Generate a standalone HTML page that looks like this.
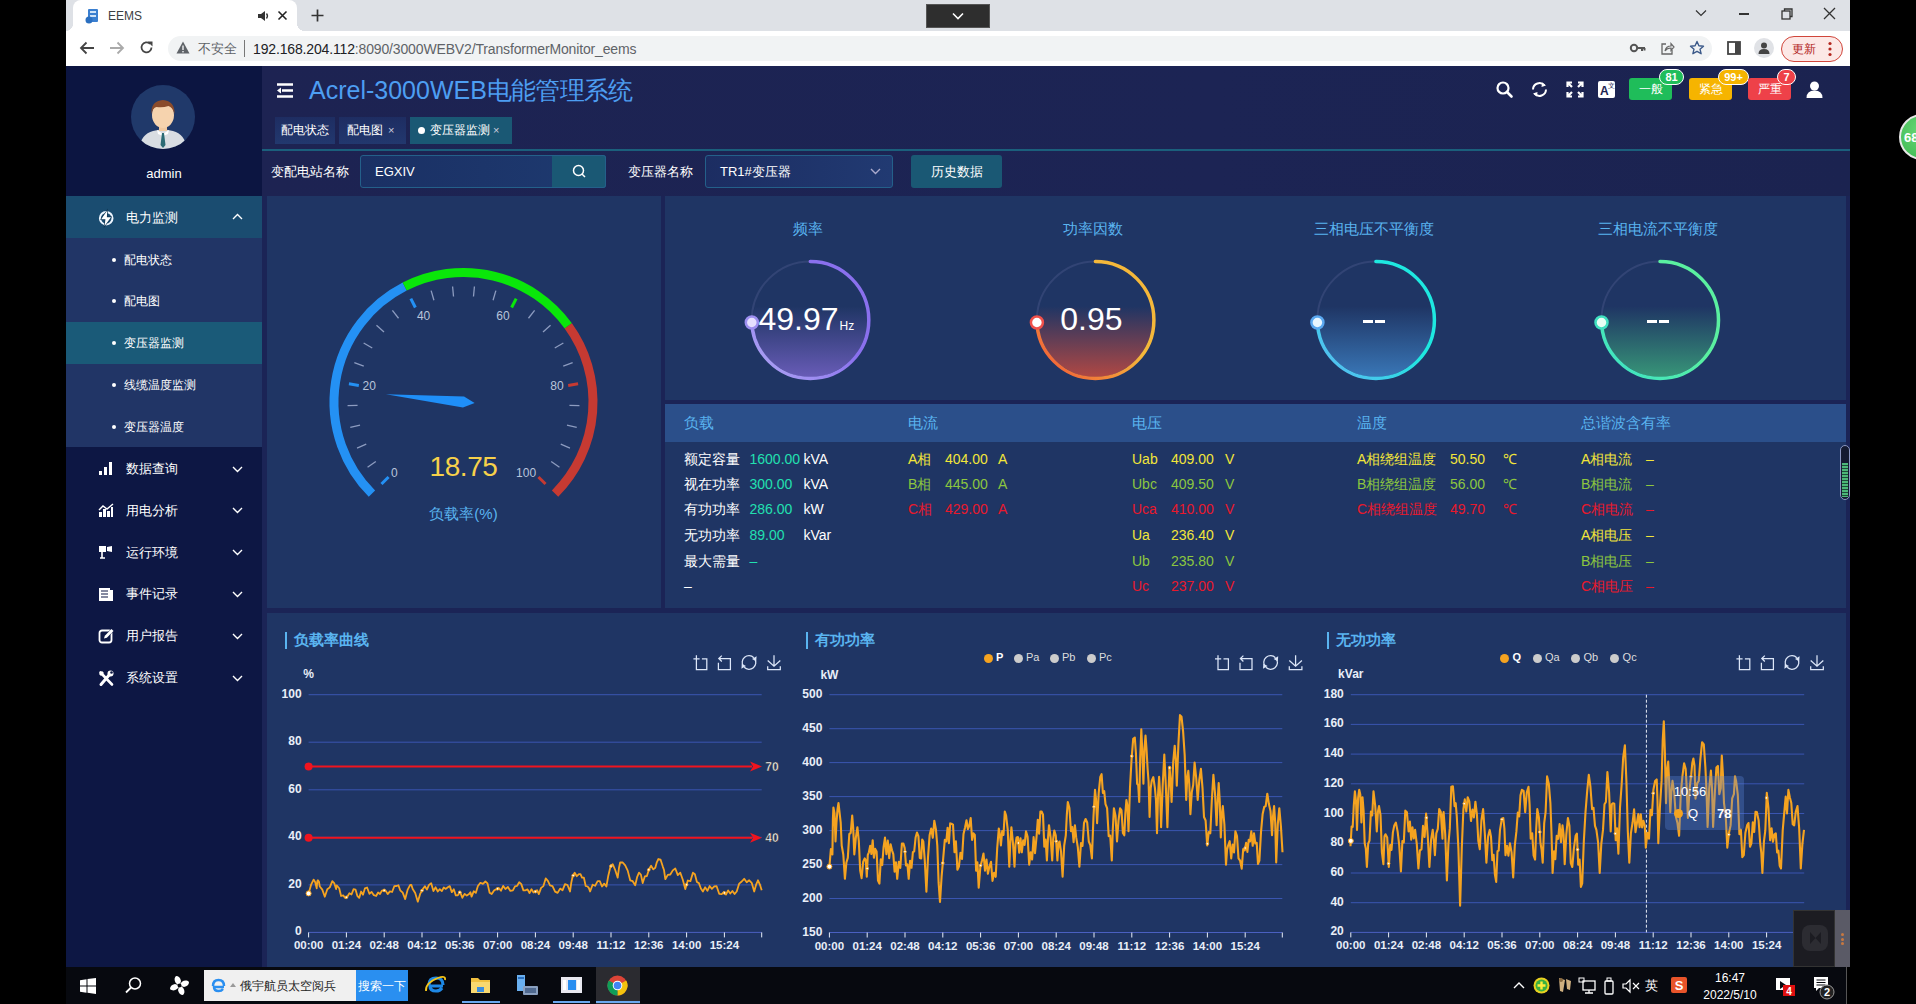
<!DOCTYPE html><html><head><meta charset="utf-8"><style>
html,body{margin:0;padding:0;}
body{width:1916px;height:1004px;background:#000;position:relative;overflow:hidden;font-family:'Liberation Sans', sans-serif;}
div{box-sizing:border-box;}
svg{position:absolute;overflow:visible;}
.c{letter-spacing:var(--ls,0px);}
.tofu .c{letter-spacing:calc(var(--ls,0px) + 0.25em);-webkit-text-stroke:0.07em currentColor;}
</style></head><body>
<script>(function(){var s=document.createElement('span');s.style.cssText='position:absolute;left:0;top:0;font-family:"Liberation Sans",sans-serif;font-size:100px;visibility:hidden;white-space:nowrap';s.textContent='电电电电';document.body.appendChild(s);if(s.getBoundingClientRect().width<350)document.documentElement.classList.add('tofu');document.body.removeChild(s);})();</script>
<div style="position:absolute;left:66px;top:0px;width:1784px;height:31px;background:#dee1e6;"></div>
<div style="position:absolute;left:73px;top:0px;width:224px;height:31px;background:#fff;border-radius:8px 8px 0 0;"></div>
<div style="position:absolute;left:66px;top:23px;width:7px;height:8px;background:radial-gradient(circle at -1px 0,#dee1e6 8px,#fff 8.5px);"></div>
<div style="position:absolute;left:297px;top:23px;width:8px;height:8px;background:radial-gradient(circle at 100% 0,#dee1e6 8px,#fff 8px);"></div>
<svg style="left:85px;top:8px" width="16" height="16"><rect x="3" y="1" width="10" height="13" rx="1" fill="#3a7fd0"/><rect x="5" y="3" width="6" height="2" fill="#cfe3f7"/><rect x="5" y="7" width="6" height="2" fill="#cfe3f7"/><circle cx="4" cy="12" r="3.5" fill="#2a6fc0"/></svg>
<div style="position:absolute;left:108px;top:7.0px;height:18px;line-height:18px;font-size:12px;color:#3c4043;white-space:nowrap;">EEMS</div>
<svg style="left:257px;top:10px" width="12" height="12"><path d="M1 4h3l4-3v10l-4-3H1z" fill="#333"/><path d="M9.5 3.5q2 2.5 0 5" stroke="#333" stroke-width="1.3" fill="none"/></svg>
<svg style="left:277px;top:10px" width="11" height="11"><path d="M1.5 1.5l8 8M9.5 1.5l-8 8" stroke="#222" stroke-width="1.6"/></svg>
<svg style="left:311px;top:9px" width="13" height="13"><path d="M6.5 0.5v12M0.5 6.5h12" stroke="#333" stroke-width="1.7"/></svg>
<div style="position:absolute;left:926px;top:4px;width:64px;height:24px;background:#2e2e2e;border:1px solid #555;"></div>
<svg style="left:952px;top:12px" width="12" height="8"><path d="M1 1.5l5 5 5-5" stroke="#fff" stroke-width="1.6" fill="none"/></svg>
<svg style="left:1695px;top:9px" width="12" height="8"><path d="M1 1.5l5 5 5-5" stroke="#333" stroke-width="1.2" fill="none"/></svg>
<div style="position:absolute;left:1739px;top:13px;width:10px;height:1.5px;background:#333;"></div>
<svg style="left:1781px;top:8px" width="12" height="12"><rect x="1" y="3" width="8" height="8" stroke="#333" stroke-width="1.3" fill="none"/><path d="M3.5 3V1h7.5v7.5H9" stroke="#333" stroke-width="1.3" fill="none"/></svg>
<svg style="left:1823px;top:7px" width="13" height="13"><path d="M1 1l11 11M12 1L1 12" stroke="#333" stroke-width="1.3"/></svg>
<div style="position:absolute;left:66px;top:31px;width:1784px;height:35px;background:#fff;"></div>
<svg style="left:79px;top:41px" width="16" height="14"><path d="M15 7H2M7.5 1.5L2 7l5.5 5.5" stroke="#444" stroke-width="1.8" fill="none"/></svg>
<svg style="left:109px;top:41px" width="16" height="14"><path d="M1 7h13M8.5 1.5L14 7l-5.5 5.5" stroke="#aaa" stroke-width="1.8" fill="none"/></svg>
<svg style="left:139px;top:40px" width="15" height="15"><path d="M12.5 7.5A5 5 0 1 1 11 3.8" stroke="#444" stroke-width="1.8" fill="none"/><path d="M8.5 1.5h5v5z" fill="#444"/></svg>
<div style="position:absolute;left:168px;top:36px;width:1544px;height:25px;background:#f1f3f4;border-radius:13px;"></div>
<svg style="left:176px;top:41px" width="14" height="13"><path d="M7 0.5L13.5 12.5H0.5z" fill="#5f6368"/><rect x="6.3" y="4.5" width="1.4" height="4.5" fill="#f1f3f4"/><rect x="6.3" y="10" width="1.4" height="1.4" fill="#f1f3f4"/></svg>
<div style="position:absolute;left:198px;top:39.0px;height:19px;line-height:19px;font-size:13px;color:#5f6368;white-space:nowrap;"><span class="c">不安全</span></div>
<div style="position:absolute;left:244px;top:40px;width:1px;height:17px;background:#777;"></div>
<div style="position:absolute;left:253px;top:38.5px;height:20px;line-height:20px;font-size:14px;color:#5f6368;white-space:nowrap;letter-spacing:-0.15px;"><span style="color:#202124">192.168.204.112</span>:8090/3000WEBV2/TransformerMonitor_eems</div>
<svg style="left:1630px;top:43px" width="16" height="10"><circle cx="4" cy="5" r="3.2" stroke="#555" stroke-width="2" fill="none"/><path d="M7 5h8M12 5v3M14.5 5v2.5" stroke="#555" stroke-width="2"/></svg>
<svg style="left:1660px;top:41px" width="14" height="14"><path d="M6 3H2v10h10V9" stroke="#666" stroke-width="1.3" fill="none"/><path d="M5 10q1-5 6-5V2.5l3 3.5-3 3.5V7q-4 0-6 3z" stroke="#666" stroke-width="1.2" fill="none"/></svg>
<svg style="left:1689px;top:40px" width="16" height="16"><path d="M8 1.5l1.9 4.3 4.6.4-3.5 3 1.1 4.5L8 11.3l-4.1 2.4L5 9.2l-3.5-3 4.6-.4z" stroke="#3c5a8a" stroke-width="1.4" fill="none" stroke-linejoin="round"/></svg>
<svg style="left:1727px;top:41px" width="14" height="14"><rect x="1" y="1" width="12" height="12" stroke="#444" stroke-width="1.8" fill="none"/><rect x="8" y="1" width="5" height="12" fill="#444"/></svg>
<div style="position:absolute;left:1754px;top:38px;width:20px;height:20px;background:#e0e2e6;border-radius:50%;"></div>
<svg style="left:1757px;top:41px" width="14" height="14"><circle cx="7" cy="4.5" r="3" fill="#444"/><path d="M1.5 13q0-5 5.5-5t5.5 5z" fill="#444"/></svg>
<div style="position:absolute;left:1781px;top:36px;width:62px;height:26px;background:#fce8e6;border:1.3px solid #d0453a;border-radius:13px;"></div>
<div style="position:absolute;left:1792px;top:40.0px;height:18px;line-height:18px;font-size:12px;color:#b3261e;white-space:nowrap;"><span class="c">更新</span></div>
<svg style="left:1828px;top:41px" width="4" height="16"><circle cx="2" cy="2.5" r="1.6" fill="#b3261e"/><circle cx="2" cy="8" r="1.6" fill="#b3261e"/><circle cx="2" cy="13.5" r="1.6" fill="#b3261e"/></svg>
<div style="position:absolute;left:66px;top:66px;width:1784px;height:901px;background:#1b2456;"></div>
<div style="position:absolute;left:262px;top:66px;width:1588px;height:130px;background:linear-gradient(90deg,#1d2352,#1c2454 60%,#1b2350);"></div>
<div style="position:absolute;left:262px;top:149px;width:1588px;height:1.5px;background:#1b5f7c;"></div>
<div style="position:absolute;left:66px;top:66px;width:196px;height:901px;background:#0d1744;"></div>
<div style="position:absolute;left:66px;top:66px;width:196px;height:130px;background:#0c1541;"></div>
<svg style="left:131px;top:85px" width="64" height="64">
<defs><clipPath id="av"><circle cx="32" cy="32" r="32"/></clipPath></defs>
<circle cx="32" cy="32" r="32" fill="#20396a"/>
<g clip-path="url(#av)">
<path d="M8 64q2-15 14-18l10-2 10 2q12 3 14 18z" fill="#d9dde2"/>
<path d="M26 45l6 4 6-4-1 4-5 2-5-2z" fill="#ffffff"/>
<path d="M31 48h2l1.5 12-2.5 3-2.5-3z" fill="#2c6b75"/>
<rect x="28" y="36" width="8" height="10" fill="#f1c9a0"/>
<ellipse cx="32" cy="30" rx="11" ry="13" fill="#f6d3ae"/>
<path d="M20.5 29q-1-13 11.5-14q12 1 11.5 14q-2-7-6-8q-6 2-12 1q-4 1-5 7z" fill="#8a4b2b"/>
</g></svg>
<div style="position:absolute;left:164px;top:163.5px;height:19px;line-height:19px;font-size:13px;color:#fff;white-space:nowrap;transform:translateX(-50%);">admin</div>
<div style="position:absolute;left:66px;top:196px;width:196px;height:42px;background:#1a4c70;"></div>
<svg style="left:98px;top:210px" width="17" height="17"><circle cx="8.2" cy="8.2" r="6.3" stroke="#eef6ff" stroke-width="2" fill="none"/><path d="M9.2 0.6L3.2 9.2H7.4L6.6 16L13 7.2H8.9z" fill="#fff" stroke="#0f3350" stroke-width="1.2" paint-order="stroke"/></svg>
<div style="position:absolute;left:126px;top:208.0px;height:19px;line-height:19px;font-size:13px;color:#fff;white-space:nowrap;"><span class="c">电力监测</span></div>
<svg style="left:232px;top:213px" width="11" height="7"><path d="M1 6l4.5-4.5L10 6" stroke="#fff" stroke-width="1.4" fill="none"/></svg>
<div style="position:absolute;left:66px;top:238px;width:196px;height:209px;background:#213566;"></div>
<div style="position:absolute;left:66px;top:322px;width:196px;height:42px;background:#1a5a78;"></div>
<div style="position:absolute;left:112px;top:257.5px;width:4px;height:4px;background:#fff;border-radius:50%;"></div>
<div style="position:absolute;left:124px;top:250.5px;height:18px;line-height:18px;font-size:12px;color:#fff;white-space:nowrap;"><span class="c">配电状态</span></div>
<div style="position:absolute;left:112px;top:299.3px;width:4px;height:4px;background:#fff;border-radius:50%;"></div>
<div style="position:absolute;left:124px;top:292.3px;height:18px;line-height:18px;font-size:12px;color:#fff;white-space:nowrap;"><span class="c">配电图</span></div>
<div style="position:absolute;left:112px;top:341.1px;width:4px;height:4px;background:#fff;border-radius:50%;"></div>
<div style="position:absolute;left:124px;top:334.1px;height:18px;line-height:18px;font-size:12px;color:#fff;white-space:nowrap;"><span class="c">变压器监测</span></div>
<div style="position:absolute;left:112px;top:382.9px;width:4px;height:4px;background:#fff;border-radius:50%;"></div>
<div style="position:absolute;left:124px;top:375.9px;height:18px;line-height:18px;font-size:12px;color:#fff;white-space:nowrap;"><span class="c">线缆温度监测</span></div>
<div style="position:absolute;left:112px;top:424.7px;width:4px;height:4px;background:#fff;border-radius:50%;"></div>
<div style="position:absolute;left:124px;top:417.7px;height:18px;line-height:18px;font-size:12px;color:#fff;white-space:nowrap;"><span class="c">变压器温度</span></div>
<svg style="left:98px;top:460.5px" width="16" height="16"><path d="M1 14h3V10H1zM6 14h3V6H6zM11 14h3V1h-3z" fill="#fff"/></svg>
<div style="position:absolute;left:126px;top:459.0px;height:19px;line-height:19px;font-size:13px;color:#fff;white-space:nowrap;"><span class="c">数据查询</span></div>
<svg style="left:232px;top:465.5px" width="11" height="7"><path d="M1 1l4.5 4.5L10 1" stroke="#fff" stroke-width="1.4" fill="none"/></svg>
<svg style="left:98px;top:502.3px" width="16" height="16"><path d="M1 15V10h3v5zM5 15V7h3v8zM9 15V9h3v6zM13 15V5h2v10z" fill="#fff"/><path d="M1 8l4-4 4 3 6-5" stroke="#fff" stroke-width="1.4" fill="none"/></svg>
<div style="position:absolute;left:126px;top:500.8px;height:19px;line-height:19px;font-size:13px;color:#fff;white-space:nowrap;"><span class="c">用电分析</span></div>
<svg style="left:232px;top:507.3px" width="11" height="7"><path d="M1 1l4.5 4.5L10 1" stroke="#fff" stroke-width="1.4" fill="none"/></svg>
<svg style="left:98px;top:544.1px" width="16" height="16"><path d="M1 2h7v6H1zM9 3l5-1v6l-5-1z" fill="#fff"/><path d="M4 8v6M2 14h5" stroke="#fff" stroke-width="1.6"/></svg>
<div style="position:absolute;left:126px;top:542.6px;height:19px;line-height:19px;font-size:13px;color:#fff;white-space:nowrap;"><span class="c">运行环境</span></div>
<svg style="left:232px;top:549.1px" width="11" height="7"><path d="M1 1l4.5 4.5L10 1" stroke="#fff" stroke-width="1.4" fill="none"/></svg>
<svg style="left:98px;top:585.9px" width="16" height="16"><path d="M1 2h11v13H1z" fill="#fff"/><path d="M3 5h7M3 8h7M3 11h7" stroke="#0d1744" stroke-width="1.2"/><path d="M12 4h3v11h-3" fill="#fff"/></svg>
<div style="position:absolute;left:126px;top:584.4px;height:19px;line-height:19px;font-size:13px;color:#fff;white-space:nowrap;"><span class="c">事件记录</span></div>
<svg style="left:232px;top:590.9px" width="11" height="7"><path d="M1 1l4.5 4.5L10 1" stroke="#fff" stroke-width="1.4" fill="none"/></svg>
<svg style="left:98px;top:627.7px" width="16" height="16"><rect x="1.5" y="2.5" width="12" height="12" rx="2.5" stroke="#fff" stroke-width="1.8" fill="none"/><path d="M6 10.5l0.8-2.8L13.5 1l2 2-6.7 6.7z" fill="#fff" stroke="#0d1744" stroke-width="0.8" paint-order="stroke"/></svg>
<div style="position:absolute;left:126px;top:626.2px;height:19px;line-height:19px;font-size:13px;color:#fff;white-space:nowrap;"><span class="c">用户报告</span></div>
<svg style="left:232px;top:632.7px" width="11" height="7"><path d="M1 1l4.5 4.5L10 1" stroke="#fff" stroke-width="1.4" fill="none"/></svg>
<svg style="left:98px;top:669.5px" width="16" height="16"><path d="M3 14.5L12 4" stroke="#fff" stroke-width="3" stroke-linecap="round"/><circle cx="12.5" cy="3.5" r="3" fill="#fff"/><circle cx="13.5" cy="2.5" r="1.3" fill="#0d1744"/><path d="M2.5 2.5l11.5 12" stroke="#fff" stroke-width="2.6" stroke-linecap="round"/><path d="M1 4l3-3 2 2-3 3z" fill="#fff"/></svg>
<div style="position:absolute;left:126px;top:668.0px;height:19px;line-height:19px;font-size:13px;color:#fff;white-space:nowrap;"><span class="c">系统设置</span></div>
<svg style="left:232px;top:674.5px" width="11" height="7"><path d="M1 1l4.5 4.5L10 1" stroke="#fff" stroke-width="1.4" fill="none"/></svg>
<svg style="left:277px;top:83px" width="17" height="15"><path d="M0 1.5h16M5 7.5h11M0 13.5h16" stroke="#fff" stroke-width="2.6"/><path d="M0 7.5l4-3v6z" fill="#fff"/></svg>
<div style="position:absolute;left:309px;top:74.5px;height:31px;line-height:31px;font-size:25px;color:#4d9ef2;white-space:nowrap;">Acrel-3000WEB<span style="--ls:-0.7px"><span class="c">电能管理系统</span></span></div>
<div style="position:absolute;left:275px;top:117px;width:60px;height:27px;background:linear-gradient(180deg,#1e2d62,#22386e);"></div>
<div style="position:absolute;left:305px;top:121.8px;height:17.5px;line-height:17.5px;font-size:11.5px;color:#fff;white-space:nowrap;transform:translateX(-50%);"><span class="c">配电状态</span></div>
<div style="position:absolute;left:339px;top:117px;width:67px;height:27px;background:linear-gradient(180deg,#1e2d62,#22386e);"></div>
<div style="position:absolute;left:347px;top:121.8px;height:17.5px;line-height:17.5px;font-size:11.5px;color:#fff;white-space:nowrap;"><span class="c">配电图</span></div>
<div style="position:absolute;left:388px;top:122.0px;height:17px;line-height:17px;font-size:11px;color:#ccd;white-space:nowrap;">×</div>
<div style="position:absolute;left:410px;top:117px;width:102px;height:27px;background:#1a5874;"></div>
<div style="position:absolute;left:418px;top:127px;width:7px;height:7px;background:#fff;border-radius:50%;"></div>
<div style="position:absolute;left:430px;top:121.8px;height:17.5px;line-height:17.5px;font-size:11.5px;color:#fff;white-space:nowrap;"><span class="c">变压器监测</span></div>
<div style="position:absolute;left:493px;top:122.0px;height:17px;line-height:17px;font-size:11px;color:#ccd;white-space:nowrap;">×</div>
<div style="position:absolute;left:271px;top:162.0px;height:19px;line-height:19px;font-size:13px;color:#fff;white-space:nowrap;"><span class="c">变配电站名称</span></div>
<div style="position:absolute;left:360px;top:155px;width:246px;height:33px;background:linear-gradient(90deg,#1a3064,#1e3a70);border:1px solid #24608a;border-radius:3px;"></div>
<div style="position:absolute;left:375px;top:162.0px;height:19px;line-height:19px;font-size:13px;color:#fff;white-space:nowrap;">EGXIV</div>
<div style="position:absolute;left:552px;top:155px;width:54px;height:33px;background:#1a5874;border:1px solid #24608a;border-left:none;border-radius:0 3px 3px 0;"></div>
<svg style="left:572px;top:164px" width="14" height="14"><circle cx="6.5" cy="6.5" r="5" stroke="#fff" stroke-width="1.5" fill="none"/><path d="M10 10l3 3" stroke="#fff" stroke-width="1.5"/></svg>
<div style="position:absolute;left:628px;top:162.0px;height:19px;line-height:19px;font-size:13px;color:#fff;white-space:nowrap;"><span class="c">变压器名称</span></div>
<div style="position:absolute;left:705px;top:155px;width:188px;height:33px;background:linear-gradient(90deg,#1c2d62,#213a72);border:1px solid #24608a;border-radius:3px;"></div>
<div style="position:absolute;left:720px;top:162.0px;height:19px;line-height:19px;font-size:13px;color:#fff;white-space:nowrap;">TR1#<span class="c">变压器</span></div>
<svg style="left:870px;top:168px" width="11" height="7"><path d="M1 1l4.5 4.5L10 1" stroke="#aac" stroke-width="1.4" fill="none"/></svg>
<div style="position:absolute;left:911px;top:155px;width:91px;height:33px;background:#1a5874;border-radius:3px;"></div>
<div style="position:absolute;left:956.5px;top:162.0px;height:19px;line-height:19px;font-size:13px;color:#fff;white-space:nowrap;transform:translateX(-50%);"><span class="c">历史数据</span></div>
<svg style="left:1496px;top:81px" width="17" height="17"><circle cx="7" cy="7" r="5.5" stroke="#fff" stroke-width="2.2" fill="none"/><path d="M11 11l4.5 4.5" stroke="#fff" stroke-width="2.6" stroke-linecap="round"/></svg>
<svg style="left:1530px;top:81px" width="19" height="17"><path d="M3 8.5A6.5 6.5 0 0 1 14.5 4.5" stroke="#fff" stroke-width="2" fill="none"/><path d="M16 8.5A6.5 6.5 0 0 1 4.5 12.5" stroke="#fff" stroke-width="2" fill="none"/><path d="M12 1.5l4 3-4.5 1.5z" fill="#fff"/><path d="M7 15.5l-4-3 4.5-1.5z" fill="#fff"/></svg>
<svg style="left:1566px;top:81px" width="18" height="17"><g stroke="#fff" stroke-width="2.2" fill="none"><path d="M1.5 6V1.5H6M1.5 1.5l4.5 4.5"/><path d="M16.5 6V1.5H12M16.5 1.5L12 6"/><path d="M1.5 11v4.5H6M1.5 15.5L6 11"/><path d="M16.5 11v4.5H12M16.5 15.5L12 11"/></g></svg>
<div style="position:absolute;left:1598px;top:81px;width:17px;height:17px;background:#fff;border-radius:2px;"></div>
<div style="position:absolute;left:1600px;top:82.0px;height:18px;line-height:18px;font-size:12px;color:#1d2352;white-space:nowrap;"><b>A</b></div>
<div style="position:absolute;left:1608px;top:78.5px;height:13px;line-height:13px;font-size:7px;color:#1d2352;white-space:nowrap;"><span class="c">文</span></div>
<div style="position:absolute;left:1629px;top:78px;width:43px;height:22px;background:#1fbd5a;border-radius:3px;"></div>
<div style="position:absolute;left:1650.5px;top:80.0px;height:18px;line-height:18px;font-size:12px;color:#fff;white-space:nowrap;transform:translateX(-50%);"><span class="c">一般</span></div>
<div style="position:absolute;left:1659px;top:69px;width:25px;height:16px;background:#1fbd5a;border:1px solid #fff;border-radius:8px;"></div>
<div style="position:absolute;left:1671.5px;top:68.5px;height:17px;line-height:17px;font-size:11px;color:#fff;white-space:nowrap;transform:translateX(-50%);font-weight:bold;">81</div>
<div style="position:absolute;left:1689px;top:78px;width:43px;height:22px;background:#f6b400;border-radius:3px;"></div>
<div style="position:absolute;left:1710.5px;top:80.0px;height:18px;line-height:18px;font-size:12px;color:#fff;white-space:nowrap;transform:translateX(-50%);"><span class="c">紧急</span></div>
<div style="position:absolute;left:1718px;top:69px;width:31px;height:16px;background:#f6b400;border:1px solid #fff;border-radius:8px;"></div>
<div style="position:absolute;left:1733.5px;top:68.5px;height:17px;line-height:17px;font-size:11px;color:#fff;white-space:nowrap;transform:translateX(-50%);font-weight:bold;">99+</div>
<div style="position:absolute;left:1748px;top:78px;width:43px;height:22px;background:#ee4149;border-radius:3px;"></div>
<div style="position:absolute;left:1769.5px;top:80.0px;height:18px;line-height:18px;font-size:12px;color:#fff;white-space:nowrap;transform:translateX(-50%);"><span class="c">严重</span></div>
<div style="position:absolute;left:1777px;top:69px;width:19px;height:16px;background:#ee4149;border:1px solid #fff;border-radius:8px;"></div>
<div style="position:absolute;left:1786.5px;top:68.5px;height:17px;line-height:17px;font-size:11px;color:#fff;white-space:nowrap;transform:translateX(-50%);font-weight:bold;">7</div>
<svg style="left:1806px;top:81px" width="17" height="17"><circle cx="8.5" cy="5" r="4.5" fill="#fff"/><path d="M0.5 17q0-7.5 8-7.5t8 7.5z" fill="#fff"/></svg>
<div style="position:absolute;left:267px;top:196px;width:394px;height:412px;background:#1f3564;"></div>
<div style="position:absolute;left:665px;top:196px;width:1181px;height:204px;background:#1f3564;"></div>
<div style="position:absolute;left:665px;top:404px;width:1181px;height:38px;background:#2b4f8a;"></div>
<div style="position:absolute;left:665px;top:442px;width:1181px;height:166px;background:#1f3564;"></div>
<div style="position:absolute;left:267px;top:613px;width:1579px;height:354px;background:#1f3564;"></div>
<svg style="left:0;top:0" width="1916" height="1004" font-family="Liberation Sans, sans-serif"><path d="M371.93 493.57A129.5 129.5 0 0 1 404.71 286.61" stroke="#2491f4" stroke-width="9" fill="none"/><path d="M404.71 286.61A129.5 129.5 0 0 1 568.27 325.88" stroke="#0ae60a" stroke-width="9" fill="none"/><path d="M568.27 325.88A129.5 129.5 0 0 1 555.07 493.57" stroke="#c63a32" stroke-width="9" fill="none"/><line x1="381.48" y1="484.02" x2="388.55" y2="476.95" stroke="#2491f4" stroke-width="3"/><line x1="367.56" y1="467.20" x2="375.83" y2="461.58" stroke="#8d9cc0" stroke-width="1.3"/><line x1="357.04" y1="448.07" x2="366.22" y2="444.10" stroke="#8d9cc0" stroke-width="1.3"/><line x1="350.29" y1="427.30" x2="360.05" y2="425.12" stroke="#8d9cc0" stroke-width="1.3"/><line x1="347.56" y1="405.64" x2="357.55" y2="405.33" stroke="#8d9cc0" stroke-width="1.3"/><line x1="348.93" y1="383.85" x2="358.81" y2="385.42" stroke="#2491f4" stroke-width="3"/><line x1="354.36" y1="362.71" x2="363.77" y2="366.09" stroke="#8d9cc0" stroke-width="1.3"/><line x1="363.65" y1="342.95" x2="372.26" y2="348.04" stroke="#8d9cc0" stroke-width="1.3"/><line x1="376.49" y1="325.29" x2="383.99" y2="331.90" stroke="#8d9cc0" stroke-width="1.3"/><line x1="392.40" y1="310.34" x2="398.53" y2="318.24" stroke="#8d9cc0" stroke-width="1.3"/><line x1="410.84" y1="298.64" x2="415.38" y2="307.55" stroke="#2491f4" stroke-width="3"/><line x1="431.14" y1="290.61" x2="433.93" y2="300.21" stroke="#8d9cc0" stroke-width="1.3"/><line x1="452.58" y1="286.51" x2="453.52" y2="296.47" stroke="#8d9cc0" stroke-width="1.3"/><line x1="474.42" y1="286.51" x2="473.48" y2="296.47" stroke="#8d9cc0" stroke-width="1.3"/><line x1="495.86" y1="290.61" x2="493.07" y2="300.21" stroke="#8d9cc0" stroke-width="1.3"/><line x1="516.16" y1="298.64" x2="511.62" y2="307.55" stroke="#0ae60a" stroke-width="3"/><line x1="534.60" y1="310.34" x2="528.47" y2="318.24" stroke="#8d9cc0" stroke-width="1.3"/><line x1="550.51" y1="325.29" x2="543.01" y2="331.90" stroke="#8d9cc0" stroke-width="1.3"/><line x1="563.35" y1="342.95" x2="554.74" y2="348.04" stroke="#8d9cc0" stroke-width="1.3"/><line x1="572.64" y1="362.71" x2="563.23" y2="366.09" stroke="#8d9cc0" stroke-width="1.3"/><line x1="578.07" y1="383.85" x2="568.19" y2="385.42" stroke="#c63a32" stroke-width="3"/><line x1="579.44" y1="405.64" x2="569.45" y2="405.33" stroke="#8d9cc0" stroke-width="1.3"/><line x1="576.71" y1="427.30" x2="566.95" y2="425.12" stroke="#8d9cc0" stroke-width="1.3"/><line x1="569.96" y1="448.07" x2="560.78" y2="444.10" stroke="#8d9cc0" stroke-width="1.3"/><line x1="559.44" y1="467.20" x2="551.17" y2="461.58" stroke="#8d9cc0" stroke-width="1.3"/><line x1="545.52" y1="484.02" x2="538.45" y2="476.95" stroke="#c63a32" stroke-width="3"/><text x="394.4" y="477.1" font-size="12" fill="#b8c4da" text-anchor="middle">0</text><text x="369.2" y="389.8" font-size="12" fill="#b8c4da" text-anchor="middle">20</text><text x="423.6" y="319.9" font-size="12" fill="#b8c4da" text-anchor="middle">40</text><text x="503.0" y="319.9" font-size="12" fill="#b8c4da" text-anchor="middle">60</text><text x="557.0" y="389.8" font-size="12" fill="#b8c4da" text-anchor="middle">80</text><text x="526.1" y="477.1" font-size="12" fill="#b8c4da" text-anchor="middle">100</text><path d="M385.88 394.35L462.95 407.57L474.65 403.10L464.05 396.43Z" fill="#1f8ff8"/></svg>
<div style="position:absolute;left:463.5px;top:450.0px;height:34px;line-height:34px;font-size:28px;color:#f7d14a;white-space:nowrap;transform:translateX(-50%);letter-spacing:-0.4px;">18.75</div>
<div style="position:absolute;left:463.5px;top:502.5px;height:21px;line-height:21px;font-size:15px;color:#5ab4f0;white-space:nowrap;transform:translateX(-50%);"><span class="c">负载率</span>(%)</div>
<div style="position:absolute;left:808.3px;top:217.5px;height:21px;line-height:21px;font-size:15px;color:#5ab4f0;white-space:nowrap;transform:translateX(-50%);"><span class="c">频率</span></div>
<svg style="left:0;top:0" width="1916" height="1004"><defs><linearGradient id="rg0" x1="1" y1="0" x2="0" y2="1"><stop offset="0.45" stop-color="#8a70ee"/><stop offset="1" stop-color="#b0a8f4"/></linearGradient><linearGradient id="rf0" x1="0" y1="0" x2="0" y2="1"><stop offset="0.38" stop-color="#7060c0" stop-opacity="0"/><stop offset="1" stop-color="#7060c0" stop-opacity="0.9"/></linearGradient></defs><circle cx="810.3" cy="320" r="57.0" fill="url(#rf0)"/><circle cx="810.3" cy="320" r="58.5" stroke="#3a4c7c" stroke-opacity="0.7" stroke-width="2" fill="none"/><path d="M810.3 261.5A58.5 58.5 0 1 1 751.8 320" stroke="url(#rg0)" stroke-width="3.5" fill="none" stroke-linecap="round"/><circle cx="751.8" cy="322.5" r="6" fill="#e6e0ff" stroke="#9d8ff0" stroke-width="2.5"/></svg>
<div style="position:absolute;left:806.3px;top:300.0px;height:38px;line-height:38px;font-size:32px;color:#fff;white-space:nowrap;transform:translateX(-50%);">49.97<span style="font-size:12px;margin-left:1px">Hz</span></div>
<div style="position:absolute;left:1093.4px;top:217.5px;height:21px;line-height:21px;font-size:15px;color:#5ab4f0;white-space:nowrap;transform:translateX(-50%);"><span class="c">功率因数</span></div>
<svg style="left:0;top:0" width="1916" height="1004"><defs><linearGradient id="rg1" x1="1" y1="0" x2="0" y2="1"><stop offset="0.45" stop-color="#f5b83a"/><stop offset="1" stop-color="#f05038"/></linearGradient><linearGradient id="rf1" x1="0" y1="0" x2="0" y2="1"><stop offset="0.38" stop-color="#c04a40" stop-opacity="0"/><stop offset="1" stop-color="#c04a40" stop-opacity="0.9"/></linearGradient></defs><circle cx="1095.4" cy="320" r="57.0" fill="url(#rf1)"/><circle cx="1095.4" cy="320" r="58.5" stroke="#3a4c7c" stroke-opacity="0.7" stroke-width="2" fill="none"/><path d="M1095.4 261.5A58.5 58.5 0 1 1 1036.9 320" stroke="url(#rg1)" stroke-width="3.5" fill="none" stroke-linecap="round"/><circle cx="1036.9" cy="322.5" r="6" fill="#fff" stroke="#f0504a" stroke-width="2.5"/></svg>
<div style="position:absolute;left:1091.4px;top:300.0px;height:38px;line-height:38px;font-size:32px;color:#fff;white-space:nowrap;transform:translateX(-50%);">0.95</div>
<div style="position:absolute;left:1373.9px;top:217.5px;height:21px;line-height:21px;font-size:15px;color:#5ab4f0;white-space:nowrap;transform:translateX(-50%);"><span class="c">三相电压不平衡度</span></div>
<svg style="left:0;top:0" width="1916" height="1004"><defs><linearGradient id="rg2" x1="1" y1="0" x2="0" y2="1"><stop offset="0.45" stop-color="#1ee8e0"/><stop offset="1" stop-color="#60b4f4"/></linearGradient><linearGradient id="rf2" x1="0" y1="0" x2="0" y2="1"><stop offset="0.38" stop-color="#3c7ec0" stop-opacity="0"/><stop offset="1" stop-color="#3c7ec0" stop-opacity="0.9"/></linearGradient></defs><circle cx="1375.9" cy="320" r="57.0" fill="url(#rf2)"/><circle cx="1375.9" cy="320" r="58.5" stroke="#3a4c7c" stroke-opacity="0.7" stroke-width="2" fill="none"/><path d="M1375.9 261.5A58.5 58.5 0 1 1 1317.4 320" stroke="url(#rg2)" stroke-width="3.5" fill="none" stroke-linecap="round"/><circle cx="1317.4" cy="322.5" r="6" fill="#e8f6ff" stroke="#5aa8f0" stroke-width="2.5"/></svg>
<div style="position:absolute;left:1362.9px;top:320.2px;width:10px;height:3px;background:#fff;"></div>
<div style="position:absolute;left:1374.9px;top:320.2px;width:10px;height:3px;background:#fff;"></div>
<div style="position:absolute;left:1658px;top:217.5px;height:21px;line-height:21px;font-size:15px;color:#5ab4f0;white-space:nowrap;transform:translateX(-50%);"><span class="c">三相电流不平衡度</span></div>
<svg style="left:0;top:0" width="1916" height="1004"><defs><linearGradient id="rg3" x1="1" y1="0" x2="0" y2="1"><stop offset="0.45" stop-color="#5af0a0"/><stop offset="1" stop-color="#3ae0c8"/></linearGradient><linearGradient id="rf3" x1="0" y1="0" x2="0" y2="1"><stop offset="0.38" stop-color="#3aa07a" stop-opacity="0"/><stop offset="1" stop-color="#3aa07a" stop-opacity="0.9"/></linearGradient></defs><circle cx="1660" cy="320" r="57.0" fill="url(#rf3)"/><circle cx="1660" cy="320" r="58.5" stroke="#3a4c7c" stroke-opacity="0.7" stroke-width="2" fill="none"/><path d="M1660 261.5A58.5 58.5 0 1 1 1601.5 320" stroke="url(#rg3)" stroke-width="3.5" fill="none" stroke-linecap="round"/><circle cx="1601.5" cy="322.5" r="6" fill="#e8fff4" stroke="#40e0c0" stroke-width="2.5"/></svg>
<div style="position:absolute;left:1647px;top:320.2px;width:10px;height:3px;background:#fff;"></div>
<div style="position:absolute;left:1659px;top:320.2px;width:10px;height:3px;background:#fff;"></div>
<div style="position:absolute;left:684px;top:411.5px;height:21px;line-height:21px;font-size:15px;color:#5ab4f0;white-space:nowrap;"><span class="c">负载</span></div>
<div style="position:absolute;left:908px;top:411.5px;height:21px;line-height:21px;font-size:15px;color:#5ab4f0;white-space:nowrap;"><span class="c">电流</span></div>
<div style="position:absolute;left:1132px;top:411.5px;height:21px;line-height:21px;font-size:15px;color:#5ab4f0;white-space:nowrap;"><span class="c">电压</span></div>
<div style="position:absolute;left:1357px;top:411.5px;height:21px;line-height:21px;font-size:15px;color:#5ab4f0;white-space:nowrap;"><span class="c">温度</span></div>
<div style="position:absolute;left:1581px;top:411.5px;height:21px;line-height:21px;font-size:15px;color:#5ab4f0;white-space:nowrap;"><span class="c">总谐波含有率</span></div>
<div style="position:absolute;left:684px;top:449.4px;height:20px;line-height:20px;font-size:14px;color:#fff;white-space:nowrap;"><span class="c">额定容量</span></div>
<div style="position:absolute;left:749.5px;top:449.4px;height:20px;line-height:20px;font-size:14px;color:#22e0b0;white-space:nowrap;">1600.00</div>
<div style="position:absolute;left:803.5px;top:449.4px;height:20px;line-height:20px;font-size:14px;color:#fff;white-space:nowrap;">kVA</div>
<div style="position:absolute;left:684px;top:474.3px;height:20px;line-height:20px;font-size:14px;color:#fff;white-space:nowrap;"><span class="c">视在功率</span></div>
<div style="position:absolute;left:749.5px;top:474.3px;height:20px;line-height:20px;font-size:14px;color:#22e0b0;white-space:nowrap;">300.00</div>
<div style="position:absolute;left:803.5px;top:474.3px;height:20px;line-height:20px;font-size:14px;color:#fff;white-space:nowrap;">kVA</div>
<div style="position:absolute;left:684px;top:499.2px;height:20px;line-height:20px;font-size:14px;color:#fff;white-space:nowrap;"><span class="c">有功功率</span></div>
<div style="position:absolute;left:749.5px;top:499.2px;height:20px;line-height:20px;font-size:14px;color:#22e0b0;white-space:nowrap;">286.00</div>
<div style="position:absolute;left:803.5px;top:499.2px;height:20px;line-height:20px;font-size:14px;color:#fff;white-space:nowrap;">kW</div>
<div style="position:absolute;left:684px;top:525.1px;height:20px;line-height:20px;font-size:14px;color:#fff;white-space:nowrap;"><span class="c">无功功率</span></div>
<div style="position:absolute;left:749.5px;top:525.1px;height:20px;line-height:20px;font-size:14px;color:#22e0b0;white-space:nowrap;">89.00</div>
<div style="position:absolute;left:803.5px;top:525.1px;height:20px;line-height:20px;font-size:14px;color:#fff;white-space:nowrap;">kVar</div>
<div style="position:absolute;left:684px;top:550.5px;height:20px;line-height:20px;font-size:14px;color:#fff;white-space:nowrap;"><span class="c">最大需量</span></div>
<div style="position:absolute;left:749.5px;top:550.5px;height:20px;line-height:20px;font-size:14px;color:#22e0b0;white-space:nowrap;">–</div>
<div style="position:absolute;left:684px;top:576.0px;height:20px;line-height:20px;font-size:14px;color:#fff;white-space:nowrap;">–</div>
<div style="position:absolute;left:908px;top:449.4px;height:20px;line-height:20px;font-size:14px;color:#f2e53a;white-space:nowrap;">A<span class="c">相</span></div>
<div style="position:absolute;left:945px;top:449.4px;height:20px;line-height:20px;font-size:14px;color:#f2e53a;white-space:nowrap;">404.00</div>
<div style="position:absolute;left:998px;top:449.4px;height:20px;line-height:20px;font-size:14px;color:#f2e53a;white-space:nowrap;">A</div>
<div style="position:absolute;left:908px;top:474.3px;height:20px;line-height:20px;font-size:14px;color:#8cc63f;white-space:nowrap;">B<span class="c">相</span></div>
<div style="position:absolute;left:945px;top:474.3px;height:20px;line-height:20px;font-size:14px;color:#8cc63f;white-space:nowrap;">445.00</div>
<div style="position:absolute;left:998px;top:474.3px;height:20px;line-height:20px;font-size:14px;color:#8cc63f;white-space:nowrap;">A</div>
<div style="position:absolute;left:908px;top:499.2px;height:20px;line-height:20px;font-size:14px;color:#e8192c;white-space:nowrap;">C<span class="c">相</span></div>
<div style="position:absolute;left:945px;top:499.2px;height:20px;line-height:20px;font-size:14px;color:#e8192c;white-space:nowrap;">429.00</div>
<div style="position:absolute;left:998px;top:499.2px;height:20px;line-height:20px;font-size:14px;color:#e8192c;white-space:nowrap;">A</div>
<div style="position:absolute;left:1132px;top:449.4px;height:20px;line-height:20px;font-size:14px;color:#f2e53a;white-space:nowrap;">Uab</div>
<div style="position:absolute;left:1171px;top:449.4px;height:20px;line-height:20px;font-size:14px;color:#f2e53a;white-space:nowrap;">409.00</div>
<div style="position:absolute;left:1225px;top:449.4px;height:20px;line-height:20px;font-size:14px;color:#f2e53a;white-space:nowrap;">V</div>
<div style="position:absolute;left:1132px;top:474.3px;height:20px;line-height:20px;font-size:14px;color:#8cc63f;white-space:nowrap;">Ubc</div>
<div style="position:absolute;left:1171px;top:474.3px;height:20px;line-height:20px;font-size:14px;color:#8cc63f;white-space:nowrap;">409.50</div>
<div style="position:absolute;left:1225px;top:474.3px;height:20px;line-height:20px;font-size:14px;color:#8cc63f;white-space:nowrap;">V</div>
<div style="position:absolute;left:1132px;top:499.2px;height:20px;line-height:20px;font-size:14px;color:#e8192c;white-space:nowrap;">Uca</div>
<div style="position:absolute;left:1171px;top:499.2px;height:20px;line-height:20px;font-size:14px;color:#e8192c;white-space:nowrap;">410.00</div>
<div style="position:absolute;left:1225px;top:499.2px;height:20px;line-height:20px;font-size:14px;color:#e8192c;white-space:nowrap;">V</div>
<div style="position:absolute;left:1132px;top:525.1px;height:20px;line-height:20px;font-size:14px;color:#f2e53a;white-space:nowrap;">Ua</div>
<div style="position:absolute;left:1171px;top:525.1px;height:20px;line-height:20px;font-size:14px;color:#f2e53a;white-space:nowrap;">236.40</div>
<div style="position:absolute;left:1225px;top:525.1px;height:20px;line-height:20px;font-size:14px;color:#f2e53a;white-space:nowrap;">V</div>
<div style="position:absolute;left:1132px;top:550.5px;height:20px;line-height:20px;font-size:14px;color:#8cc63f;white-space:nowrap;">Ub</div>
<div style="position:absolute;left:1171px;top:550.5px;height:20px;line-height:20px;font-size:14px;color:#8cc63f;white-space:nowrap;">235.80</div>
<div style="position:absolute;left:1225px;top:550.5px;height:20px;line-height:20px;font-size:14px;color:#8cc63f;white-space:nowrap;">V</div>
<div style="position:absolute;left:1132px;top:576.0px;height:20px;line-height:20px;font-size:14px;color:#e8192c;white-space:nowrap;">Uc</div>
<div style="position:absolute;left:1171px;top:576.0px;height:20px;line-height:20px;font-size:14px;color:#e8192c;white-space:nowrap;">237.00</div>
<div style="position:absolute;left:1225px;top:576.0px;height:20px;line-height:20px;font-size:14px;color:#e8192c;white-space:nowrap;">V</div>
<div style="position:absolute;left:1357px;top:449.4px;height:20px;line-height:20px;font-size:14px;color:#f2e53a;white-space:nowrap;">A<span class="c">相绕组温度</span></div>
<div style="position:absolute;left:1450px;top:449.4px;height:20px;line-height:20px;font-size:14px;color:#f2e53a;white-space:nowrap;">50.50</div>
<div style="position:absolute;left:1503px;top:449.4px;height:20px;line-height:20px;font-size:14px;color:#f2e53a;white-space:nowrap;"><span class="c">℃</span></div>
<div style="position:absolute;left:1357px;top:474.3px;height:20px;line-height:20px;font-size:14px;color:#8cc63f;white-space:nowrap;">B<span class="c">相绕组温度</span></div>
<div style="position:absolute;left:1450px;top:474.3px;height:20px;line-height:20px;font-size:14px;color:#8cc63f;white-space:nowrap;">56.00</div>
<div style="position:absolute;left:1503px;top:474.3px;height:20px;line-height:20px;font-size:14px;color:#8cc63f;white-space:nowrap;"><span class="c">℃</span></div>
<div style="position:absolute;left:1357px;top:499.2px;height:20px;line-height:20px;font-size:14px;color:#e8192c;white-space:nowrap;">C<span class="c">相绕组温度</span></div>
<div style="position:absolute;left:1450px;top:499.2px;height:20px;line-height:20px;font-size:14px;color:#e8192c;white-space:nowrap;">49.70</div>
<div style="position:absolute;left:1503px;top:499.2px;height:20px;line-height:20px;font-size:14px;color:#e8192c;white-space:nowrap;"><span class="c">℃</span></div>
<div style="position:absolute;left:1581px;top:449.4px;height:20px;line-height:20px;font-size:14px;color:#f2e53a;white-space:nowrap;">A<span class="c">相电流</span></div>
<div style="position:absolute;left:1646px;top:449.4px;height:20px;line-height:20px;font-size:14px;color:#f2e53a;white-space:nowrap;">–</div>
<div style="position:absolute;left:1581px;top:474.3px;height:20px;line-height:20px;font-size:14px;color:#8cc63f;white-space:nowrap;">B<span class="c">相电流</span></div>
<div style="position:absolute;left:1646px;top:474.3px;height:20px;line-height:20px;font-size:14px;color:#8cc63f;white-space:nowrap;">–</div>
<div style="position:absolute;left:1581px;top:499.2px;height:20px;line-height:20px;font-size:14px;color:#e8192c;white-space:nowrap;">C<span class="c">相电流</span></div>
<div style="position:absolute;left:1646px;top:499.2px;height:20px;line-height:20px;font-size:14px;color:#e8192c;white-space:nowrap;">–</div>
<div style="position:absolute;left:1581px;top:525.1px;height:20px;line-height:20px;font-size:14px;color:#f2e53a;white-space:nowrap;">A<span class="c">相电压</span></div>
<div style="position:absolute;left:1646px;top:525.1px;height:20px;line-height:20px;font-size:14px;color:#f2e53a;white-space:nowrap;">–</div>
<div style="position:absolute;left:1581px;top:550.5px;height:20px;line-height:20px;font-size:14px;color:#8cc63f;white-space:nowrap;">B<span class="c">相电压</span></div>
<div style="position:absolute;left:1646px;top:550.5px;height:20px;line-height:20px;font-size:14px;color:#8cc63f;white-space:nowrap;">–</div>
<div style="position:absolute;left:1581px;top:576.0px;height:20px;line-height:20px;font-size:14px;color:#e8192c;white-space:nowrap;">C<span class="c">相电压</span></div>
<div style="position:absolute;left:1646px;top:576.0px;height:20px;line-height:20px;font-size:14px;color:#e8192c;white-space:nowrap;">–</div>
<div style="position:absolute;left:1840px;top:445px;width:10px;height:55px;background:#141a30;border:1px solid #8a96c0;border-radius:5px;"></div>
<div style="position:absolute;left:1842px;top:463px;width:6px;height:34px;background:repeating-linear-gradient(180deg,#4cb878 0 2px,#1e4a3a 2px 3px);"></div>
<svg style="left:0;top:0" width="1916" height="1004" font-family="Liberation Sans, sans-serif"><line x1="308.6" y1="932.4" x2="761.7" y2="932.4" stroke="#4a60c0" stroke-width="1"/><text x="301.6" y="935.4" font-size="12" font-weight="bold" fill="#e8eef8" text-anchor="end">0</text><line x1="308.6" y1="884.9" x2="761.7" y2="884.9" stroke="#3a55b0" stroke-width="1"/><text x="301.6" y="887.9" font-size="12" font-weight="bold" fill="#e8eef8" text-anchor="end">20</text><line x1="308.6" y1="837.3" x2="761.7" y2="837.3" stroke="#3a55b0" stroke-width="1"/><text x="301.6" y="840.3" font-size="12" font-weight="bold" fill="#e8eef8" text-anchor="end">40</text><line x1="308.6" y1="789.8" x2="761.7" y2="789.8" stroke="#3a55b0" stroke-width="1"/><text x="301.6" y="792.8" font-size="12" font-weight="bold" fill="#e8eef8" text-anchor="end">60</text><line x1="308.6" y1="742.2" x2="761.7" y2="742.2" stroke="#3a55b0" stroke-width="1"/><text x="301.6" y="745.2" font-size="12" font-weight="bold" fill="#e8eef8" text-anchor="end">80</text><line x1="308.6" y1="694.7" x2="761.7" y2="694.7" stroke="#3a55b0" stroke-width="1"/><text x="301.6" y="697.7" font-size="12" font-weight="bold" fill="#e8eef8" text-anchor="end">100</text><line x1="308.6" y1="932.4" x2="308.6" y2="937.4" stroke="#e8eef8" stroke-width="1"/><text x="308.6" y="949.4" font-size="11.5" font-weight="bold" fill="#e8eef8" text-anchor="middle">00:00</text><line x1="346.4" y1="932.4" x2="346.4" y2="937.4" stroke="#e8eef8" stroke-width="1"/><text x="346.4" y="949.4" font-size="11.5" font-weight="bold" fill="#e8eef8" text-anchor="middle">01:24</text><line x1="384.2" y1="932.4" x2="384.2" y2="937.4" stroke="#e8eef8" stroke-width="1"/><text x="384.2" y="949.4" font-size="11.5" font-weight="bold" fill="#e8eef8" text-anchor="middle">02:48</text><line x1="422.0" y1="932.4" x2="422.0" y2="937.4" stroke="#e8eef8" stroke-width="1"/><text x="422.0" y="949.4" font-size="11.5" font-weight="bold" fill="#e8eef8" text-anchor="middle">04:12</text><line x1="459.8" y1="932.4" x2="459.8" y2="937.4" stroke="#e8eef8" stroke-width="1"/><text x="459.8" y="949.4" font-size="11.5" font-weight="bold" fill="#e8eef8" text-anchor="middle">05:36</text><line x1="497.6" y1="932.4" x2="497.6" y2="937.4" stroke="#e8eef8" stroke-width="1"/><text x="497.6" y="949.4" font-size="11.5" font-weight="bold" fill="#e8eef8" text-anchor="middle">07:00</text><line x1="535.4" y1="932.4" x2="535.4" y2="937.4" stroke="#e8eef8" stroke-width="1"/><text x="535.4" y="949.4" font-size="11.5" font-weight="bold" fill="#e8eef8" text-anchor="middle">08:24</text><line x1="573.2" y1="932.4" x2="573.2" y2="937.4" stroke="#e8eef8" stroke-width="1"/><text x="573.2" y="949.4" font-size="11.5" font-weight="bold" fill="#e8eef8" text-anchor="middle">09:48</text><line x1="611.0" y1="932.4" x2="611.0" y2="937.4" stroke="#e8eef8" stroke-width="1"/><text x="611.0" y="949.4" font-size="11.5" font-weight="bold" fill="#e8eef8" text-anchor="middle">11:12</text><line x1="648.8" y1="932.4" x2="648.8" y2="937.4" stroke="#e8eef8" stroke-width="1"/><text x="648.8" y="949.4" font-size="11.5" font-weight="bold" fill="#e8eef8" text-anchor="middle">12:36</text><line x1="686.6" y1="932.4" x2="686.6" y2="937.4" stroke="#e8eef8" stroke-width="1"/><text x="686.6" y="949.4" font-size="11.5" font-weight="bold" fill="#e8eef8" text-anchor="middle">14:00</text><line x1="724.4" y1="932.4" x2="724.4" y2="937.4" stroke="#e8eef8" stroke-width="1"/><text x="724.4" y="949.4" font-size="11.5" font-weight="bold" fill="#e8eef8" text-anchor="middle">15:24</text><line x1="761.7" y1="932.4" x2="761.7" y2="937.4" stroke="#e8eef8" stroke-width="1"/><text x="308.6" y="678.4" font-size="12" font-weight="bold" fill="#e8eef8" text-anchor="middle">%</text><line x1="308.6" y1="766.5" x2="752" y2="766.5" stroke="#f0141e" stroke-width="2"/><circle cx="308.6" cy="766.5" r="4" fill="#f0141e"/><path d="M750 761.5L762 766.5L750 771.5L753 766.5z" fill="#f0141e"/><text x="772" y="771.0" font-size="12" font-weight="bold" fill="#fff" stroke="#333" stroke-width="0.5" text-anchor="middle">70</text><line x1="308.6" y1="837.8" x2="752" y2="837.8" stroke="#f0141e" stroke-width="2"/><circle cx="308.6" cy="837.8" r="4" fill="#f0141e"/><path d="M750 832.8L762 837.8L750 842.8L753 837.8z" fill="#f0141e"/><text x="772" y="842.3" font-size="12" font-weight="bold" fill="#fff" stroke="#333" stroke-width="0.5" text-anchor="middle">40</text><polyline points="308.6,893.4 311.1,884.7 313.6,879.6 315.1,881.9 316.7,888.4 317.3,881.3 317.9,880.3 318.9,881.5 319.8,886.5 322.3,889.6 324.8,896.7 327.3,889.3 329.8,887.4 332.3,881.1 334.2,883.1 336.1,889.1 336.7,885.3 337.3,886.0 339.2,888.3 341.1,896.0 343.2,895.4 345.2,898.0 347.3,896.7 349.4,893.3 351.5,894.5 353.6,889.1 355.5,889.6 357.3,895.8 359.2,897.9 361.1,891.5 363.0,894.8 364.9,888.4 367.1,887.5 369.4,893.8 371.6,891.9 373.9,895.2 376.1,896.0 378.1,892.5 380.0,894.0 381.9,890.6 383.9,890.3 385.8,890.9 387.7,894.1 389.9,891.4 392.1,892.0 394.3,886.2 396.5,886.0 398.4,885.3 400.2,890.3 402.7,892.7 405.2,899.1 407.7,889.6 410.2,884.9 411.4,885.0 412.7,889.1 415.2,893.0 417.8,901.7 420.3,893.6 422.8,889.1 424.9,886.3 426.9,889.6 429.0,884.9 431.2,883.2 433.4,891.1 435.6,887.3 437.8,891.5 439.8,889.2 441.8,891.1 443.8,887.5 445.8,888.9 447.8,887.2 449.8,886.1 451.8,892.2 453.8,889.2 455.8,895.4 457.8,895.3 460.1,891.9 462.3,897.8 464.6,893.9 466.8,895.6 469.1,894.1 470.4,892.3 471.6,896.7 473.7,891.3 475.8,892.9 477.9,886.0 480.4,882.8 482.9,883.9 485.4,881.5 487.5,883.4 489.6,892.7 491.7,894.1 494.2,890.3 496.7,889.1 498.9,888.2 501.0,890.7 503.2,885.9 505.4,889.1 507.9,886.9 510.4,890.9 512.9,890.3 515.0,886.3 517.1,885.9 519.2,882.2 521.3,884.1 523.4,890.4 525.5,890.3 527.5,889.4 529.5,893.0 531.5,889.2 533.5,892.5 535.5,891.5 537.1,890.2 538.8,894.1 541.1,887.9 543.4,886.1 545.7,878.4 547.9,880.9 550.0,885.3 552.5,886.1 555.1,891.6 557.6,892.9 560.1,888.6 562.5,890.3 565.0,884.1 567.5,885.0 570.0,891.5 571.3,882.6 572.6,876.5 574.7,872.7 576.8,876.2 578.9,874.2 580.5,874.2 582.0,877.7 583.9,877.7 585.7,886.0 587.6,886.5 588.9,888.1 590.1,891.5 592.6,884.7 595.1,885.8 597.6,881.1 599.8,881.1 602.0,886.5 604.2,883.6 606.4,886.5 608.3,875.7 610.2,867.7 611.5,865.1 612.7,864.2 615.2,870.0 617.7,877.7 619.0,867.8 620.2,862.3 622.7,862.5 625.2,865.4 627.7,870.6 630.2,880.3 632.7,881.2 635.2,885.3 637.1,877.2 639.0,872.7 640.9,874.6 642.7,883.0 644.8,876.4 646.9,876.0 649.0,869.2 651.1,865.7 653.2,869.4 655.3,867.7 656.8,862.3 658.4,859.0 660.6,859.7 662.8,866.6 664.0,870.0 665.3,879.2 667.8,874.9 670.3,874.5 672.8,870.4 675.3,868.5 677.8,875.1 680.3,872.7 682.8,879.7 685.3,889.1 687.8,880.5 690.4,881.2 692.9,872.7 694.9,874.2 696.9,882.0 698.9,883.1 700.9,888.5 702.9,891.5 705.1,887.3 707.4,890.8 709.6,886.0 711.9,888.9 714.1,886.5 716.6,886.2 719.2,893.8 721.7,894.1 723.8,892.3 726.0,894.5 728.1,890.4 730.3,893.5 732.4,891.0 734.6,894.0 736.7,891.5 739.2,883.6 741.7,881.5 744.2,878.8 746.7,882.2 749.2,880.3 751.7,882.8 754.2,891.5 756.1,884.7 758.0,880.3 759.9,884.6 761.7,890.3" stroke="#f5a320" stroke-width="1.8" fill="none" stroke-linejoin="round"/><circle cx="308.6" cy="893.4" r="2.5" fill="#fff" stroke="#f5a320" stroke-width="1"/><circle cx="346.4" cy="897.3" r="1.3" fill="#fff" stroke="#f5a320" stroke-width="1"/><circle cx="384.2" cy="890.4" r="1.3" fill="#fff" stroke="#f5a320" stroke-width="1"/><circle cx="422.0" cy="890.6" r="1.3" fill="#fff" stroke="#f5a320" stroke-width="1"/><circle cx="459.8" cy="892.3" r="1.3" fill="#fff" stroke="#f5a320" stroke-width="1"/><circle cx="497.6" cy="888.8" r="1.3" fill="#fff" stroke="#f5a320" stroke-width="1"/><circle cx="535.4" cy="891.6" r="1.3" fill="#fff" stroke="#f5a320" stroke-width="1"/><circle cx="573.2" cy="875.5" r="1.3" fill="#fff" stroke="#f5a320" stroke-width="1"/><circle cx="611.0" cy="866.1" r="1.3" fill="#fff" stroke="#f5a320" stroke-width="1"/><circle cx="648.8" cy="869.8" r="1.3" fill="#fff" stroke="#f5a320" stroke-width="1"/><circle cx="686.6" cy="884.7" r="1.3" fill="#fff" stroke="#f5a320" stroke-width="1"/><circle cx="724.4" cy="892.9" r="1.3" fill="#fff" stroke="#f5a320" stroke-width="1"/><path d="M696.4 655.3V669.7H706.8V658.8H701.9M693.4 658.8H699.6" stroke="#dce6f8" stroke-width="1.25" fill="none"/><path d="M718.4 662.8V669.7H730.4V658.5H719.1999999999999M721.8 655.5999999999999L718.8 658.5L721.8 661.5" stroke="#dce6f8" stroke-width="1.25" fill="none"/><path d="M743.43 666.40A6.8 6.8 0 0 1 753.81 657.69M754.57 658.60A6.8 6.8 0 0 1 744.19 667.31" stroke="#dce6f8" stroke-width="1.25" fill="none"/><path d="M756.6 656.3L756.2 661.3L752 658.9z" fill="#dce6f8"/><path d="M741.4 668.7L741.8 663.7L746 666.1z" fill="#dce6f8"/><path d="M774 655.3V666.1999999999999M767.7 660.5L774 666.1999999999999L780.3 660.5M767.7 666.1999999999999V669.7H780.3V666.1999999999999" stroke="#dce6f8" stroke-width="1.25" fill="none"/><line x1="829.4" y1="932.5" x2="1282.3" y2="932.5" stroke="#4a60c0" stroke-width="1"/><text x="822.4" y="935.5" font-size="12" font-weight="bold" fill="#e8eef8" text-anchor="end">150</text><line x1="829.4" y1="898.5" x2="1282.3" y2="898.5" stroke="#3a55b0" stroke-width="1"/><text x="822.4" y="901.5" font-size="12" font-weight="bold" fill="#e8eef8" text-anchor="end">200</text><line x1="829.4" y1="864.6" x2="1282.3" y2="864.6" stroke="#3a55b0" stroke-width="1"/><text x="822.4" y="867.6" font-size="12" font-weight="bold" fill="#e8eef8" text-anchor="end">250</text><line x1="829.4" y1="830.6" x2="1282.3" y2="830.6" stroke="#3a55b0" stroke-width="1"/><text x="822.4" y="833.6" font-size="12" font-weight="bold" fill="#e8eef8" text-anchor="end">300</text><line x1="829.4" y1="796.6" x2="1282.3" y2="796.6" stroke="#3a55b0" stroke-width="1"/><text x="822.4" y="799.6" font-size="12" font-weight="bold" fill="#e8eef8" text-anchor="end">350</text><line x1="829.4" y1="762.6" x2="1282.3" y2="762.6" stroke="#3a55b0" stroke-width="1"/><text x="822.4" y="765.6" font-size="12" font-weight="bold" fill="#e8eef8" text-anchor="end">400</text><line x1="829.4" y1="728.7" x2="1282.3" y2="728.7" stroke="#3a55b0" stroke-width="1"/><text x="822.4" y="731.7" font-size="12" font-weight="bold" fill="#e8eef8" text-anchor="end">450</text><line x1="829.4" y1="694.7" x2="1282.3" y2="694.7" stroke="#3a55b0" stroke-width="1"/><text x="822.4" y="697.7" font-size="12" font-weight="bold" fill="#e8eef8" text-anchor="end">500</text><line x1="829.4" y1="932.5" x2="829.4" y2="937.5" stroke="#e8eef8" stroke-width="1"/><text x="829.4" y="949.5" font-size="11.5" font-weight="bold" fill="#e8eef8" text-anchor="middle">00:00</text><line x1="867.2" y1="932.5" x2="867.2" y2="937.5" stroke="#e8eef8" stroke-width="1"/><text x="867.2" y="949.5" font-size="11.5" font-weight="bold" fill="#e8eef8" text-anchor="middle">01:24</text><line x1="905.0" y1="932.5" x2="905.0" y2="937.5" stroke="#e8eef8" stroke-width="1"/><text x="905.0" y="949.5" font-size="11.5" font-weight="bold" fill="#e8eef8" text-anchor="middle">02:48</text><line x1="942.8" y1="932.5" x2="942.8" y2="937.5" stroke="#e8eef8" stroke-width="1"/><text x="942.8" y="949.5" font-size="11.5" font-weight="bold" fill="#e8eef8" text-anchor="middle">04:12</text><line x1="980.6" y1="932.5" x2="980.6" y2="937.5" stroke="#e8eef8" stroke-width="1"/><text x="980.6" y="949.5" font-size="11.5" font-weight="bold" fill="#e8eef8" text-anchor="middle">05:36</text><line x1="1018.4" y1="932.5" x2="1018.4" y2="937.5" stroke="#e8eef8" stroke-width="1"/><text x="1018.4" y="949.5" font-size="11.5" font-weight="bold" fill="#e8eef8" text-anchor="middle">07:00</text><line x1="1056.2" y1="932.5" x2="1056.2" y2="937.5" stroke="#e8eef8" stroke-width="1"/><text x="1056.2" y="949.5" font-size="11.5" font-weight="bold" fill="#e8eef8" text-anchor="middle">08:24</text><line x1="1094.0" y1="932.5" x2="1094.0" y2="937.5" stroke="#e8eef8" stroke-width="1"/><text x="1094.0" y="949.5" font-size="11.5" font-weight="bold" fill="#e8eef8" text-anchor="middle">09:48</text><line x1="1131.8" y1="932.5" x2="1131.8" y2="937.5" stroke="#e8eef8" stroke-width="1"/><text x="1131.8" y="949.5" font-size="11.5" font-weight="bold" fill="#e8eef8" text-anchor="middle">11:12</text><line x1="1169.6" y1="932.5" x2="1169.6" y2="937.5" stroke="#e8eef8" stroke-width="1"/><text x="1169.6" y="949.5" font-size="11.5" font-weight="bold" fill="#e8eef8" text-anchor="middle">12:36</text><line x1="1207.4" y1="932.5" x2="1207.4" y2="937.5" stroke="#e8eef8" stroke-width="1"/><text x="1207.4" y="949.5" font-size="11.5" font-weight="bold" fill="#e8eef8" text-anchor="middle">14:00</text><line x1="1245.2" y1="932.5" x2="1245.2" y2="937.5" stroke="#e8eef8" stroke-width="1"/><text x="1245.2" y="949.5" font-size="11.5" font-weight="bold" fill="#e8eef8" text-anchor="middle">15:24</text><line x1="1282.3" y1="932.5" x2="1282.3" y2="937.5" stroke="#e8eef8" stroke-width="1"/><text x="829.4" y="678.5" font-size="12" font-weight="bold" fill="#e8eef8" text-anchor="middle">kW</text><polyline points="829.4,866.6 830.9,849.0 832.4,854.4 832.9,819.2 833.4,807.5 834.5,813.3 835.5,841.5 836.5,822.2 837.5,809.5 838.5,803.0 839.6,812.9 840.7,822.6 841.7,845.5 843.3,854.5 844.9,878.8 846.4,862.5 847.8,857.9 849.3,834.1 850.7,832.9 852.2,815.6 853.2,828.1 854.3,854.4 855.8,838.1 857.4,827.2 858.8,840.9 860.2,870.6 861.6,878.1 863.2,861.7 864.7,858.4 865.8,860.2 866.8,876.8 867.8,854.9 868.9,852.3 870.2,845.7 871.4,854.0 872.7,840.2 873.9,857.8 875.2,848.9 876.6,851.6 878.0,880.6 879.4,883.6 880.8,859.4 882.2,865.1 883.6,846.9 885.0,837.6 886.4,854.1 887.8,840.5 889.2,858.1 890.6,844.2 892.0,850.3 893.3,854.1 894.6,871.6 895.9,862.2 897.2,878.8 898.8,861.8 900.3,868.0 901.9,843.6 903.4,843.5 904.7,848.1 906.0,865.4 907.4,864.4 908.7,878.8 910.1,860.7 911.5,867.8 912.9,852.2 914.2,851.4 915.6,837.5 917.0,832.6 918.4,836.1 919.8,857.9 921.2,858.4 922.2,839.5 923.3,841.5 924.8,860.9 926.4,891.7 928.0,857.5 929.6,835.3 931.2,828.5 932.8,837.7 934.3,820.7 935.9,829.2 937.3,845.6 938.6,882.7 940.0,901.9 941.6,876.7 943.2,858.4 944.8,839.8 946.3,841.5 947.6,827.7 948.9,843.2 950.2,823.4 951.5,823.8 953.0,824.6 954.5,852.3 955.9,841.2 957.4,869.7 958.9,866.6 960.5,852.7 962.0,858.9 963.5,834.0 965.1,827.2 966.5,820.2 967.9,829.0 969.3,825.8 970.7,818.0 972.1,840.0 973.5,833.3 974.8,834.9 976.1,870.8 977.4,862.3 978.7,887.7 980.4,866.4 982.0,860.5 983.5,853.5 985.0,870.7 986.5,859.5 987.9,873.8 989.4,866.6 991.0,861.8 992.5,880.9 994.1,872.7 995.7,876.8 997.2,848.3 998.8,828.5 999.8,833.9 1000.9,845.5 1002.2,831.1 1003.5,835.0 1004.8,811.5 1006.1,815.6 1007.7,829.4 1009.3,866.6 1010.3,842.3 1011.4,827.2 1013.0,843.4 1014.5,866.6 1015.5,844.4 1016.6,837.4 1017.9,837.0 1019.2,852.6 1020.5,838.2 1021.8,852.3 1023.2,840.4 1024.6,844.9 1026.0,831.3 1027.6,836.7 1029.2,864.6 1030.7,852.3 1032.1,859.5 1033.6,837.1 1035.0,853.2 1036.5,837.4 1037.8,819.7 1039.1,833.6 1040.4,811.5 1041.7,811.6 1043.0,814.6 1044.3,846.6 1045.6,839.5 1046.9,860.5 1048.0,838.0 1049.0,825.2 1050.6,837.5 1052.2,860.5 1053.2,839.1 1054.3,830.6 1055.8,835.5 1057.4,860.5 1058.5,843.1 1059.5,841.5 1061.0,851.3 1062.6,876.8 1064.2,845.5 1065.8,835.3 1066.8,815.2 1067.8,802.0 1069.4,808.0 1071.0,831.3 1072.3,827.1 1073.6,842.2 1074.9,825.2 1076.2,837.4 1077.8,847.1 1079.4,866.6 1081.0,843.0 1082.5,846.0 1084.0,823.0 1085.6,819.0 1087.2,822.5 1088.8,841.5 1090.3,845.2 1091.9,858.4 1093.5,816.2 1095.0,789.8 1096.0,799.4 1097.1,823.1 1098.7,793.2 1100.3,776.9 1101.6,774.2 1102.9,793.0 1104.2,791.2 1105.5,804.1 1107.1,808.1 1108.7,836.1 1110.2,835.5 1111.8,860.5 1112.8,829.9 1113.9,808.2 1115.5,815.7 1117.0,841.5 1118.5,820.7 1120.1,808.2 1121.5,810.4 1122.9,832.9 1124.3,835.3 1125.3,814.4 1126.4,800.0 1127.5,806.3 1128.5,831.3 1130.0,787.8 1131.6,758.6 1133.2,738.8 1134.8,737.5 1135.9,752.9 1137.1,783.7 1138.2,785.0 1139.2,802.0 1140.2,758.1 1141.3,729.4 1142.3,751.2 1143.4,783.7 1144.5,748.3 1145.5,735.5 1146.5,748.8 1147.6,768.8 1148.6,781.9 1149.6,817.0 1150.7,788.1 1151.7,781.0 1153.3,777.1 1154.9,787.8 1156.0,800.5 1157.0,833.3 1158.0,796.1 1159.1,776.9 1160.1,793.7 1161.1,827.2 1162.7,785.5 1164.3,754.5 1165.8,785.3 1167.4,827.2 1168.5,791.1 1169.5,766.7 1170.5,779.0 1171.6,802.0 1173.2,762.0 1174.7,745.7 1175.8,759.9 1176.8,785.7 1178.4,744.2 1180.0,715.1 1181.5,716.7 1183.1,731.4 1184.7,755.3 1186.2,800.0 1187.2,778.3 1188.3,770.8 1189.3,784.7 1190.4,814.3 1191.8,792.1 1193.2,785.0 1194.6,762.6 1196.2,778.0 1197.7,800.0 1199.3,779.8 1200.9,768.8 1202.5,787.8 1204.0,817.0 1205.6,820.5 1207.2,845.5 1208.8,832.1 1210.3,833.3 1211.8,800.6 1213.4,774.9 1215.0,793.0 1216.6,825.2 1217.7,800.5 1218.7,783.0 1219.8,802.2 1220.8,837.4 1221.8,815.0 1222.8,806.1 1224.4,824.5 1226.0,864.6 1227.0,850.1 1228.1,845.5 1229.7,841.2 1231.2,858.4 1232.6,844.5 1234.0,852.4 1235.4,831.3 1237.0,836.2 1238.5,858.4 1240.1,860.7 1241.7,868.6 1243.2,849.1 1244.8,850.3 1246.1,842.9 1247.4,851.9 1248.7,839.8 1250.0,841.5 1251.3,831.3 1252.7,845.8 1254.0,833.3 1255.3,843.5 1256.7,842.8 1258.0,863.9 1259.4,860.5 1261.0,832.1 1262.6,814.3 1264.2,807.0 1265.7,806.1 1267.3,793.7 1268.9,804.1 1270.5,810.9 1272.0,835.3 1273.0,816.6 1274.1,806.1 1275.2,822.3 1276.2,862.5 1277.8,824.0 1279.3,808.2 1280.9,826.0 1282.5,852.3" stroke="#f5a320" stroke-width="2.1" fill="none" stroke-linejoin="round"/><circle cx="829.4" cy="866.6" r="2.5" fill="#fff" stroke="#f5a320" stroke-width="1"/><circle cx="867.2" cy="868.5" r="1.3" fill="#fff" stroke="#f5a320" stroke-width="1"/><circle cx="905.0" cy="851.7" r="1.3" fill="#fff" stroke="#f5a320" stroke-width="1"/><circle cx="942.8" cy="863.0" r="1.3" fill="#fff" stroke="#f5a320" stroke-width="1"/><circle cx="980.6" cy="865.5" r="1.3" fill="#fff" stroke="#f5a320" stroke-width="1"/><circle cx="1018.4" cy="843.0" r="1.3" fill="#fff" stroke="#f5a320" stroke-width="1"/><circle cx="1056.2" cy="841.2" r="1.3" fill="#fff" stroke="#f5a320" stroke-width="1"/><circle cx="1094.0" cy="806.8" r="1.3" fill="#fff" stroke="#f5a320" stroke-width="1"/><circle cx="1131.8" cy="756.1" r="1.3" fill="#fff" stroke="#f5a320" stroke-width="1"/><circle cx="1169.6" cy="767.9" r="1.3" fill="#fff" stroke="#f5a320" stroke-width="1"/><circle cx="1207.4" cy="843.8" r="1.3" fill="#fff" stroke="#f5a320" stroke-width="1"/><circle cx="1245.2" cy="848.0" r="1.3" fill="#fff" stroke="#f5a320" stroke-width="1"/><path d="M1218.0 655.3V669.7H1228.4V658.8H1223.5M1215.0 658.8H1221.2" stroke="#dce6f8" stroke-width="1.25" fill="none"/><path d="M1240.0 662.8V669.7H1252.0V658.5H1240.8M1243.4 655.5999999999999L1240.4 658.5L1243.4 661.5" stroke="#dce6f8" stroke-width="1.25" fill="none"/><path d="M1265.03 666.40A6.8 6.8 0 0 1 1275.41 657.69M1276.17 658.60A6.8 6.8 0 0 1 1265.79 667.31" stroke="#dce6f8" stroke-width="1.25" fill="none"/><path d="M1278.1999999999998 656.3L1277.8 661.3L1273.6 658.9z" fill="#dce6f8"/><path d="M1263.0 668.7L1263.3999999999999 663.7L1267.6 666.1z" fill="#dce6f8"/><path d="M1295.6 655.3V666.1999999999999M1289.3 660.5L1295.6 666.1999999999999L1301.8999999999999 660.5M1289.3 666.1999999999999V669.7H1301.8999999999999V666.1999999999999" stroke="#dce6f8" stroke-width="1.25" fill="none"/><line x1="1350.8" y1="932.4" x2="1804.2" y2="932.4" stroke="#4a60c0" stroke-width="1"/><text x="1343.8" y="935.4" font-size="12" font-weight="bold" fill="#e8eef8" text-anchor="end">20</text><line x1="1350.8" y1="902.7" x2="1804.2" y2="902.7" stroke="#3a55b0" stroke-width="1"/><text x="1343.8" y="905.7" font-size="12" font-weight="bold" fill="#e8eef8" text-anchor="end">40</text><line x1="1350.8" y1="873.0" x2="1804.2" y2="873.0" stroke="#3a55b0" stroke-width="1"/><text x="1343.8" y="876.0" font-size="12" font-weight="bold" fill="#e8eef8" text-anchor="end">60</text><line x1="1350.8" y1="843.3" x2="1804.2" y2="843.3" stroke="#3a55b0" stroke-width="1"/><text x="1343.8" y="846.3" font-size="12" font-weight="bold" fill="#e8eef8" text-anchor="end">80</text><line x1="1350.8" y1="813.5" x2="1804.2" y2="813.5" stroke="#3a55b0" stroke-width="1"/><text x="1343.8" y="816.5" font-size="12" font-weight="bold" fill="#e8eef8" text-anchor="end">100</text><line x1="1350.8" y1="783.8" x2="1804.2" y2="783.8" stroke="#3a55b0" stroke-width="1"/><text x="1343.8" y="786.8" font-size="12" font-weight="bold" fill="#e8eef8" text-anchor="end">120</text><line x1="1350.8" y1="754.1" x2="1804.2" y2="754.1" stroke="#3a55b0" stroke-width="1"/><text x="1343.8" y="757.1" font-size="12" font-weight="bold" fill="#e8eef8" text-anchor="end">140</text><line x1="1350.8" y1="724.4" x2="1804.2" y2="724.4" stroke="#3a55b0" stroke-width="1"/><text x="1343.8" y="727.4" font-size="12" font-weight="bold" fill="#e8eef8" text-anchor="end">160</text><line x1="1350.8" y1="694.7" x2="1804.2" y2="694.7" stroke="#3a55b0" stroke-width="1"/><text x="1343.8" y="697.7" font-size="12" font-weight="bold" fill="#e8eef8" text-anchor="end">180</text><line x1="1350.8" y1="932.4" x2="1350.8" y2="937.4" stroke="#e8eef8" stroke-width="1"/><text x="1350.8" y="949.4" font-size="11.5" font-weight="bold" fill="#e8eef8" text-anchor="middle">00:00</text><line x1="1388.6" y1="932.4" x2="1388.6" y2="937.4" stroke="#e8eef8" stroke-width="1"/><text x="1388.6" y="949.4" font-size="11.5" font-weight="bold" fill="#e8eef8" text-anchor="middle">01:24</text><line x1="1426.4" y1="932.4" x2="1426.4" y2="937.4" stroke="#e8eef8" stroke-width="1"/><text x="1426.4" y="949.4" font-size="11.5" font-weight="bold" fill="#e8eef8" text-anchor="middle">02:48</text><line x1="1464.2" y1="932.4" x2="1464.2" y2="937.4" stroke="#e8eef8" stroke-width="1"/><text x="1464.2" y="949.4" font-size="11.5" font-weight="bold" fill="#e8eef8" text-anchor="middle">04:12</text><line x1="1502.0" y1="932.4" x2="1502.0" y2="937.4" stroke="#e8eef8" stroke-width="1"/><text x="1502.0" y="949.4" font-size="11.5" font-weight="bold" fill="#e8eef8" text-anchor="middle">05:36</text><line x1="1539.8" y1="932.4" x2="1539.8" y2="937.4" stroke="#e8eef8" stroke-width="1"/><text x="1539.8" y="949.4" font-size="11.5" font-weight="bold" fill="#e8eef8" text-anchor="middle">07:00</text><line x1="1577.6" y1="932.4" x2="1577.6" y2="937.4" stroke="#e8eef8" stroke-width="1"/><text x="1577.6" y="949.4" font-size="11.5" font-weight="bold" fill="#e8eef8" text-anchor="middle">08:24</text><line x1="1615.4" y1="932.4" x2="1615.4" y2="937.4" stroke="#e8eef8" stroke-width="1"/><text x="1615.4" y="949.4" font-size="11.5" font-weight="bold" fill="#e8eef8" text-anchor="middle">09:48</text><line x1="1653.2" y1="932.4" x2="1653.2" y2="937.4" stroke="#e8eef8" stroke-width="1"/><text x="1653.2" y="949.4" font-size="11.5" font-weight="bold" fill="#e8eef8" text-anchor="middle">11:12</text><line x1="1691.0" y1="932.4" x2="1691.0" y2="937.4" stroke="#e8eef8" stroke-width="1"/><text x="1691.0" y="949.4" font-size="11.5" font-weight="bold" fill="#e8eef8" text-anchor="middle">12:36</text><line x1="1728.8" y1="932.4" x2="1728.8" y2="937.4" stroke="#e8eef8" stroke-width="1"/><text x="1728.8" y="949.4" font-size="11.5" font-weight="bold" fill="#e8eef8" text-anchor="middle">14:00</text><line x1="1766.6" y1="932.4" x2="1766.6" y2="937.4" stroke="#e8eef8" stroke-width="1"/><text x="1766.6" y="949.4" font-size="11.5" font-weight="bold" fill="#e8eef8" text-anchor="middle">15:24</text><line x1="1804.2" y1="932.4" x2="1804.2" y2="937.4" stroke="#e8eef8" stroke-width="1"/><text x="1350.8" y="678.4" font-size="12" font-weight="bold" fill="#e8eef8" text-anchor="middle">kVar</text><line x1="1646.4" y1="694.7" x2="1646.4" y2="932.4" stroke="#e8eef8" stroke-width="1" stroke-dasharray="3,2"/><polyline points="1350.5,846.2 1351.6,826.6 1352.7,826.9 1353.8,805.4 1354.9,791.3 1356.0,801.3 1357.0,829.9 1358.1,798.2 1359.2,789.8 1360.3,794.5 1361.4,822.5 1362.0,801.7 1362.5,797.2 1363.6,810.8 1364.7,843.3 1365.8,848.5 1366.9,867.0 1368.2,843.6 1369.5,840.6 1370.9,811.6 1372.2,815.5 1373.5,791.3 1375.2,805.6 1376.8,831.4 1377.9,812.0 1379.0,806.1 1380.5,814.9 1381.9,852.2 1383.4,864.1 1384.5,836.3 1385.5,834.3 1387.2,837.6 1388.8,867.0 1390.2,845.0 1391.5,849.9 1392.9,832.4 1394.3,825.4 1395.9,822.6 1397.6,831.4 1399.2,844.9 1400.9,871.5 1402.4,841.0 1403.8,842.4 1405.3,810.6 1406.9,812.3 1408.6,831.4 1409.9,821.6 1411.2,839.6 1412.5,827.4 1413.8,838.5 1415.1,829.9 1416.8,844.2 1418.4,868.5 1419.9,850.4 1421.5,849.3 1423.0,825.8 1424.6,837.0 1426.1,813.6 1427.8,836.9 1429.4,867.0 1431.1,839.6 1432.7,829.9 1433.8,839.6 1434.9,855.1 1436.3,833.4 1437.8,828.8 1439.2,809.1 1440.8,812.1 1442.5,838.8 1443.0,815.0 1443.6,812.1 1445.2,834.0 1446.9,880.4 1448.4,844.2 1449.8,828.4 1451.3,786.8 1452.9,786.3 1454.6,806.1 1455.7,803.2 1456.8,816.5 1458.4,848.6 1460.1,905.7 1461.8,848.0 1463.4,809.1 1464.8,799.4 1466.3,811.5 1467.7,797.2 1469.3,801.3 1471.0,821.0 1472.5,809.6 1473.9,817.4 1475.4,801.7 1476.9,814.3 1478.3,840.8 1479.8,849.2 1481.4,820.5 1483.1,809.1 1484.8,833.1 1486.4,862.6 1488.1,836.6 1489.7,829.9 1491.0,836.7 1492.3,860.3 1493.6,854.8 1494.9,874.5 1496.2,881.9 1497.5,851.2 1498.7,850.6 1500.0,829.9 1501.7,819.6 1503.3,818.0 1504.4,828.5 1505.5,855.1 1507.0,845.9 1508.4,855.6 1509.9,843.3 1511.6,852.6 1513.2,877.4 1514.8,845.6 1516.4,831.4 1517.8,812.5 1519.2,816.4 1520.5,795.2 1521.9,789.8 1523.6,790.8 1525.2,812.1 1526.8,792.2 1528.5,786.8 1529.6,804.6 1530.7,838.8 1532.2,833.3 1533.6,855.4 1535.1,859.6 1536.2,828.7 1537.3,809.1 1538.9,817.5 1540.5,843.3 1541.6,849.7 1542.7,862.6 1544.2,823.1 1545.6,812.1 1547.1,776.4 1548.8,783.7 1550.4,803.2 1551.5,833.3 1552.6,873.0 1554.0,851.4 1555.3,859.1 1556.7,835.9 1558.1,838.8 1559.6,824.1 1561.0,842.2 1562.5,825.4 1563.6,834.6 1564.7,864.1 1566.3,834.6 1567.9,818.0 1569.4,825.8 1570.8,863.2 1572.3,867.0 1573.9,848.3 1575.6,835.8 1576.9,833.6 1578.2,864.7 1579.6,859.6 1580.9,886.9 1582.2,883.4 1583.8,841.8 1585.5,812.1 1587.2,790.8 1588.8,774.9 1590.4,786.5 1592.1,809.1 1593.5,807.8 1595.0,825.9 1596.4,829.9 1598.1,842.4 1599.7,873.0 1601.3,844.0 1603.0,829.9 1604.5,804.3 1605.9,802.0 1607.4,772.0 1609.1,792.4 1610.7,831.4 1611.8,804.3 1612.9,803.2 1614.3,803.8 1615.7,840.3 1617.0,828.4 1618.4,853.7 1620.0,807.7 1621.6,785.3 1623.2,757.4 1624.9,745.2 1626.4,780.9 1627.8,830.9 1629.3,862.6 1630.9,833.2 1632.6,822.5 1634.1,809.4 1635.5,832.1 1637.0,822.5 1638.3,814.1 1639.6,827.1 1640.8,814.3 1642.1,827.5 1643.4,820.7 1644.7,825.4 1645.2,833.4 1645.8,847.7 1647.4,832.8 1649.0,838.8 1650.5,809.7 1651.9,815.2 1653.4,789.8 1655.1,781.0 1656.7,779.4 1657.5,800.7 1658.3,843.3 1659.9,807.5 1661.6,780.9 1662.7,740.9 1663.8,721.4 1664.9,752.4 1666.0,803.2 1667.1,769.6 1668.2,761.6 1669.2,782.4 1670.3,812.1 1671.4,791.3 1672.5,780.9 1674.2,792.6 1675.8,816.5 1677.4,822.7 1679.1,835.8 1680.8,793.3 1682.4,776.4 1684.1,763.4 1685.7,769.0 1686.8,789.7 1687.9,818.0 1689.6,788.7 1691.2,774.9 1692.3,763.0 1693.4,758.6 1694.5,765.7 1695.5,798.7 1697.2,783.3 1698.8,780.9 1700.4,758.9 1702.1,742.2 1703.8,744.3 1705.4,767.5 1706.5,791.0 1707.6,826.9 1709.2,789.1 1710.9,770.5 1712.0,787.7 1713.1,826.9 1714.8,793.7 1716.4,767.5 1717.9,765.9 1719.3,794.2 1720.8,788.3 1721.3,766.8 1721.8,755.6 1722.9,774.0 1724.0,803.2 1725.7,815.6 1727.3,847.7 1728.9,833.3 1730.6,825.4 1732.2,798.4 1733.9,794.2 1735.0,776.3 1736.1,780.9 1737.8,794.8 1739.4,834.3 1740.9,829.7 1742.3,857.1 1743.8,855.1 1745.4,832.7 1747.1,825.4 1748.5,823.0 1750.0,846.8 1751.4,843.3 1752.8,822.3 1754.2,832.0 1755.5,811.9 1756.9,812.1 1758.6,820.2 1760.2,843.3 1761.3,852.8 1762.4,873.0 1763.9,841.8 1765.3,830.5 1766.8,792.8 1768.4,807.6 1770.1,840.3 1771.6,828.3 1773.0,841.8 1774.5,834.3 1775.8,833.4 1777.1,852.4 1778.4,850.6 1779.7,865.8 1781.0,868.5 1782.7,830.7 1784.3,812.1 1785.7,796.6 1787.0,813.4 1788.4,789.9 1789.8,797.2 1791.3,803.1 1792.7,824.2 1794.2,825.4 1795.8,811.6 1797.5,806.1 1799.2,829.0 1800.8,868.5 1802.4,843.9 1804.0,829.9" stroke="#f5a320" stroke-width="2.1" fill="none" stroke-linejoin="round"/><circle cx="1350.8" cy="840.9" r="2.5" fill="#fff" stroke="#f5a320" stroke-width="1"/><circle cx="1388.6" cy="863.5" r="1.3" fill="#fff" stroke="#f5a320" stroke-width="1"/><circle cx="1426.4" cy="817.8" r="1.3" fill="#fff" stroke="#f5a320" stroke-width="1"/><circle cx="1464.2" cy="803.7" r="1.3" fill="#fff" stroke="#f5a320" stroke-width="1"/><circle cx="1502.0" cy="819.3" r="1.3" fill="#fff" stroke="#f5a320" stroke-width="1"/><circle cx="1539.8" cy="832.0" r="1.3" fill="#fff" stroke="#f5a320" stroke-width="1"/><circle cx="1577.6" cy="849.6" r="1.3" fill="#fff" stroke="#f5a320" stroke-width="1"/><circle cx="1615.4" cy="833.6" r="1.3" fill="#fff" stroke="#f5a320" stroke-width="1"/><circle cx="1653.2" cy="793.2" r="1.3" fill="#fff" stroke="#f5a320" stroke-width="1"/><circle cx="1691.0" cy="776.6" r="1.3" fill="#fff" stroke="#f5a320" stroke-width="1"/><circle cx="1728.8" cy="834.6" r="1.3" fill="#fff" stroke="#f5a320" stroke-width="1"/><circle cx="1766.6" cy="797.9" r="1.3" fill="#fff" stroke="#f5a320" stroke-width="1"/><path d="M1739.4 655.3V669.7H1749.8000000000002V658.8H1744.9M1736.4 658.8H1742.6000000000001" stroke="#dce6f8" stroke-width="1.25" fill="none"/><path d="M1761.4 662.8V669.7H1773.4V658.5H1762.2M1764.8000000000002 655.5999999999999L1761.8000000000002 658.5L1764.8000000000002 661.5" stroke="#dce6f8" stroke-width="1.25" fill="none"/><path d="M1786.43 666.40A6.8 6.8 0 0 1 1796.81 657.69M1797.57 658.60A6.8 6.8 0 0 1 1787.19 667.31" stroke="#dce6f8" stroke-width="1.25" fill="none"/><path d="M1799.6 656.3L1799.2 661.3L1795 658.9z" fill="#dce6f8"/><path d="M1784.4 668.7L1784.8 663.7L1789 666.1z" fill="#dce6f8"/><path d="M1817 655.3V666.1999999999999M1810.7 660.5L1817 666.1999999999999L1823.3 660.5M1810.7 666.1999999999999V669.7H1823.3V666.1999999999999" stroke="#dce6f8" stroke-width="1.25" fill="none"/></svg>
<div style="position:absolute;left:284.7px;top:632px;width:2.2px;height:16.5px;background:#5ab4f0;"></div>
<div style="position:absolute;left:293.7px;top:629.0px;height:21px;line-height:21px;font-size:15px;color:#5ab4f0;white-space:nowrap;font-weight:bold;"><span class="c">负载率曲线</span></div>
<div style="position:absolute;left:806.2px;top:632px;width:2.2px;height:16.5px;background:#5ab4f0;"></div>
<div style="position:absolute;left:815.2px;top:629.0px;height:21px;line-height:21px;font-size:15px;color:#5ab4f0;white-space:nowrap;font-weight:bold;"><span class="c">有功功率</span></div>
<div style="position:absolute;left:1327px;top:632px;width:2.2px;height:16.5px;background:#5ab4f0;"></div>
<div style="position:absolute;left:1336px;top:629.0px;height:21px;line-height:21px;font-size:15px;color:#5ab4f0;white-space:nowrap;font-weight:bold;"><span class="c">无功功率</span></div>
<div style="position:absolute;left:983.5px;top:653.5px;width:9px;height:9px;background:#f5a320;border-radius:50%;"></div>
<div style="position:absolute;left:996px;top:649.0px;height:17px;line-height:17px;font-size:11px;color:#fff;white-space:nowrap;font-weight:bold;">P</div>
<div style="position:absolute;left:1013.5px;top:653.5px;width:9px;height:9px;background:#ccc;border-radius:50%;"></div>
<div style="position:absolute;left:1026px;top:649.0px;height:17px;line-height:17px;font-size:11px;color:#ddd;white-space:nowrap;">Pa</div>
<div style="position:absolute;left:1049.5px;top:653.5px;width:9px;height:9px;background:#ccc;border-radius:50%;"></div>
<div style="position:absolute;left:1062px;top:649.0px;height:17px;line-height:17px;font-size:11px;color:#ddd;white-space:nowrap;">Pb</div>
<div style="position:absolute;left:1086.5px;top:653.5px;width:9px;height:9px;background:#ccc;border-radius:50%;"></div>
<div style="position:absolute;left:1099px;top:649.0px;height:17px;line-height:17px;font-size:11px;color:#ddd;white-space:nowrap;">Pc</div>
<div style="position:absolute;left:1500.0px;top:653.5px;width:9px;height:9px;background:#f5a320;border-radius:50%;"></div>
<div style="position:absolute;left:1512.5px;top:649.0px;height:17px;line-height:17px;font-size:11px;color:#fff;white-space:nowrap;font-weight:bold;">Q</div>
<div style="position:absolute;left:1532.5px;top:653.5px;width:9px;height:9px;background:#ccc;border-radius:50%;"></div>
<div style="position:absolute;left:1545px;top:649.0px;height:17px;line-height:17px;font-size:11px;color:#ddd;white-space:nowrap;">Qa</div>
<div style="position:absolute;left:1571.0px;top:653.5px;width:9px;height:9px;background:#ccc;border-radius:50%;"></div>
<div style="position:absolute;left:1583.5px;top:649.0px;height:17px;line-height:17px;font-size:11px;color:#ddd;white-space:nowrap;">Qb</div>
<div style="position:absolute;left:1610.1px;top:653.5px;width:9px;height:9px;background:#ccc;border-radius:50%;"></div>
<div style="position:absolute;left:1622.6px;top:649.0px;height:17px;line-height:17px;font-size:11px;color:#ddd;white-space:nowrap;">Qc</div>
<div style="position:absolute;left:1665px;top:776px;width:79px;height:54px;background:rgba(92,135,215,0.33);border-radius:4px;"></div>
<div style="position:absolute;left:1690px;top:781.5px;height:19px;line-height:19px;font-size:13px;color:#fff;white-space:nowrap;transform:translateX(-50%);">10:56</div>
<div style="position:absolute;left:1674px;top:809px;width:9px;height:9px;background:#f5a320;border-radius:50%;"></div>
<div style="position:absolute;left:1688px;top:804.0px;height:19px;line-height:19px;font-size:13px;color:#fff;white-space:nowrap;">Q</div>
<div style="position:absolute;left:1717px;top:804.0px;height:19px;line-height:19px;font-size:13px;color:#fff;white-space:nowrap;font-weight:bold;">78</div>
<div style="position:absolute;left:1793px;top:910px;width:42px;height:57px;background:#1c1c22;border:1px solid #333;"></div>
<div style="position:absolute;left:1835px;top:910px;width:15px;height:57px;background:#5a5a66;"></div>
<svg style="left:1801px;top:924px" width="28" height="28"><rect x="1" y="1" width="26" height="26" rx="8" fill="#2c2c32"/><path d="M9 8l11 12V8L9 20z" fill="#1c1c22"/></svg>
<div style="position:absolute;left:1841px;top:933.0px;width:3px;height:3px;background:#c87840;border-radius:50%;"></div>
<div style="position:absolute;left:1841px;top:937.5px;width:3px;height:3px;background:#c87840;border-radius:50%;"></div>
<div style="position:absolute;left:1841px;top:942.0px;width:3px;height:3px;background:#c87840;border-radius:50%;"></div>
<div style="position:absolute;left:66px;top:967px;width:1781px;height:37px;background:#07090f;"></div>
<svg style="left:80px;top:978px" width="16" height="16"><path d="M0 2.2L6.5 1.3V7.5H0zM7.5 1.1L16 0v7.5H7.5zM0 8.5h6.5v6.2L0 13.8zM7.5 8.5H16V16l-8.5-1.2z" fill="#fff"/></svg>
<svg style="left:125px;top:977px" width="17" height="17"><circle cx="10" cy="6.5" r="5.5" stroke="#fff" stroke-width="1.5" fill="none"/><path d="M6 10.5L1 15.5" stroke="#fff" stroke-width="1.8"/></svg>
<svg style="left:169px;top:975px" width="21" height="21"><g fill="#fff"><path d="M10.5 10.5C6 9 4 4 7 1q4 0 5 5z"/><path d="M10.5 10.5C12 6 17 4 20 7q0 4-5 5z"/><path d="M10.5 10.5C15 12 17 17 14 20q-4 0-5-5z"/><path d="M10.5 10.5C9 15 4 17 1 14q0-4 5-5z"/></g><circle cx="10.5" cy="10.5" r="2" fill="#07090f"/></svg>
<div style="position:absolute;left:204px;top:970px;width:152px;height:31px;background:#f0f0f0;"></div>
<svg style="left:209px;top:977px" width="18" height="17"><path d="M15 10H5q0 4 4.5 4 3 0 4.5-2" stroke="#2a8ff0" stroke-width="2.5" fill="none"/><path d="M4 9q0-6 5.5-6T15 9" stroke="#2a8ff0" stroke-width="2.5" fill="none"/></svg>
<svg style="left:230px;top:983px" width="6" height="4"><path d="M0 4L3 0l3 4z" fill="#999"/></svg>
<div style="position:absolute;left:240px;top:976.5px;height:18px;line-height:18px;font-size:12px;color:#222;white-space:nowrap;"><span class="c">俄宇航员太空阅兵</span></div>
<div style="position:absolute;left:356px;top:970px;width:52px;height:31px;background:#2a8ff0;"></div>
<div style="position:absolute;left:382px;top:976.5px;height:18px;line-height:18px;font-size:12px;color:#fff;white-space:nowrap;transform:translateX(-50%);"><span class="c">搜索一下</span></div>
<svg style="left:424px;top:974px" width="22" height="22"><path d="M19 12H6q0 5 6 5 4 0 6-3" stroke="#1e88e5" stroke-width="3.2" fill="none"/><path d="M5 11q0-7 7-7t7 7" stroke="#1e88e5" stroke-width="3.2" fill="none"/><path d="M2 17q-1-8 12-13 8-3 7 2" stroke="#f5c518" stroke-width="1.8" fill="none"/></svg>
<svg style="left:470px;top:976px" width="21" height="18"><path d="M1 2h7l2 2h10v13H1z" fill="#f0c040"/><path d="M1 6h19v11H1z" fill="#f8d870"/><rect x="7" y="11" width="7" height="5" fill="#3a8ee0"/></svg>
<div style="position:absolute;left:462px;top:1001px;width:38px;height:2px;background:#6aa8f0;"></div>
<svg style="left:515px;top:974px" width="24" height="22"><rect x="2" y="1" width="8" height="16" fill="#6ab0f0"/><rect x="3" y="3" width="6" height="2" fill="#2a70c0"/><rect x="8" y="12" width="15" height="9" rx="1" fill="#8aa0c0"/><rect x="10" y="14" width="11" height="5" fill="#506a90"/></svg>
<div style="position:absolute;left:553px;top:1001px;width:37px;height:2px;background:#6aa8f0;"></div>
<svg style="left:561px;top:977px" width="21" height="16"><rect x="0" y="0" width="21" height="16" fill="#e8e8f0"/><rect x="2" y="3" width="3" height="10" fill="#fff"/><rect x="7" y="3" width="8" height="10" fill="#2a8ff0"/><rect x="16" y="3" width="3" height="10" fill="#fff"/></svg>
<div style="position:absolute;left:596px;top:967px;width:44px;height:37px;background:#2b2b30;"></div>
<svg style="left:607px;top:975px" width="21" height="21"><circle cx="10.5" cy="10.5" r="10" fill="#db4437"/><path d="M10.5 10.5L19.2 5.5A10 10 0 0 1 10.5 20.5z" fill="#f4c20d"/><path d="M10.5 10.5L10.5 20.5A10 10 0 0 1 1.8 5.5z" fill="#0f9d58"/><circle cx="10.5" cy="10.5" r="4.8" fill="#fff"/><circle cx="10.5" cy="10.5" r="3.8" fill="#4285f4"/></svg>
<div style="position:absolute;left:596px;top:1001px;width:44px;height:2px;background:#6aa8f0;"></div>
<svg style="left:1513px;top:981px" width="12" height="8"><path d="M1 7l5-5 5 5" stroke="#fff" stroke-width="1.4" fill="none"/></svg>
<svg style="left:1533px;top:977px" width="17" height="17"><circle cx="8.5" cy="8.5" r="8" fill="#e8d020"/><circle cx="8.5" cy="8.5" r="6" fill="#3ab040"/><path d="M8.5 4.5v8M4.5 8.5h8" stroke="#ffeb3b" stroke-width="2.4"/></svg>
<svg style="left:1557px;top:976px" width="16" height="18"><path d="M2 2l6 2-2 12-3-1zM9 3l5 2-1 9-3-1z" fill="#d0b080"/><circle cx="4" cy="4" r="2" fill="#8a6a40"/></svg>
<svg style="left:1579px;top:978px" width="17" height="16"><rect x="4" y="3" width="12" height="9" stroke="#fff" stroke-width="1.3" fill="none"/><path d="M10 12v3M6 15h8" stroke="#fff" stroke-width="1.3"/><rect x="0" y="0" width="5" height="4" stroke="#fff" stroke-width="1" fill="none"/></svg>
<svg style="left:1603px;top:977px" width="12" height="18"><rect x="2" y="4" width="8" height="13" rx="1" stroke="#fff" stroke-width="1.3" fill="none"/><rect x="4" y="1" width="4" height="3" stroke="#fff" stroke-width="1" fill="none"/></svg>
<svg style="left:1622px;top:979px" width="18" height="14"><path d="M1 5h3l4-4v12l-4-4H1z" stroke="#fff" stroke-width="1.2" fill="none"/><path d="M11 4l6 6M17 4l-6 6" stroke="#fff" stroke-width="1.2"/></svg>
<div style="position:absolute;left:1645px;top:976.0px;height:19px;line-height:19px;font-size:13px;color:#fff;white-space:nowrap;"><span class="c">英</span></div>
<div style="position:absolute;left:1671px;top:977px;width:16px;height:16px;background:#e8542a;border-radius:2px;"></div>
<div style="position:absolute;left:1679px;top:976.0px;height:19px;line-height:19px;font-size:13px;color:#fff;white-space:nowrap;transform:translateX(-50%);font-weight:bold;">S</div>
<div style="position:absolute;left:1730px;top:968.5px;height:18px;line-height:18px;font-size:12px;color:#fff;white-space:nowrap;transform:translateX(-50%);">16:47</div>
<div style="position:absolute;left:1730px;top:986.0px;height:18px;line-height:18px;font-size:12px;color:#fff;white-space:nowrap;transform:translateX(-50%);">2022/5/10</div>
<svg style="left:1775px;top:977px" width="22" height="20"><path d="M1 1h14v12H1z" fill="#fff"/><path d="M5 4l6 4-6 4z" fill="#07090f"/><rect x="8" y="8" width="12" height="11" fill="#e01010"/><text x="14" y="17.5" font-size="10" font-weight="bold" fill="#fff" text-anchor="middle" font-family="Liberation Sans">4</text></svg>
<svg style="left:1812px;top:976px" width="24" height="24"><path d="M2 1h14v11h-9l-3 3v-3H2z" fill="#fff"/><path d="M4.5 4h9M4.5 6.5h9M4.5 9h9" stroke="#07090f" stroke-width="1"/><circle cx="15" cy="16" r="7" fill="#222" stroke="#999" stroke-width="1"/><text x="15" y="20" font-size="11" font-weight="bold" fill="#fff" text-anchor="middle" font-family="Liberation Sans">2</text></svg>
<div style="position:absolute;left:1846px;top:967px;width:1px;height:37px;background:#555;"></div>
<div style="position:absolute;left:1899px;top:114px;width:46px;height:46px;background:radial-gradient(circle at 50% 35%,#6ad878,#3cb850);border:2px solid #e8e8e8;border-radius:50%;"></div>
<div style="position:absolute;left:1904px;top:127.5px;height:19px;line-height:19px;font-size:13px;color:#fff;white-space:nowrap;font-weight:bold;">68</div>
</body></html>
